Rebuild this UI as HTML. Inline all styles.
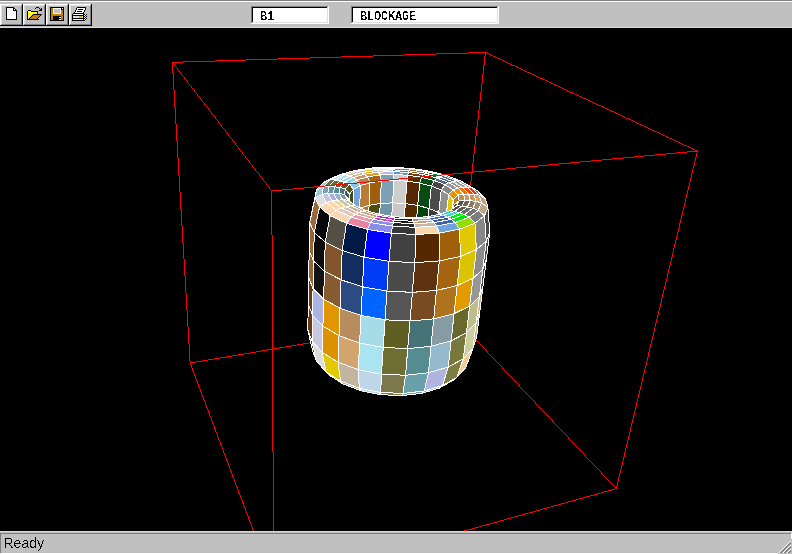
<!DOCTYPE html>
<html><head><meta charset="utf-8"><style>
html,body{margin:0;padding:0;background:#000;overflow:hidden;}
svg{display:block;}
</style></head><body>
<svg width="792" height="554" viewBox="0 0 792 554">
<defs><filter id="alias" x="0" y="0" width="100%" height="100%"><feComponentTransfer><feFuncA type="discrete" tableValues="0 0 0 1 1"/></feComponentTransfer></filter></defs>
<rect x="0" y="0" width="792" height="554" fill="#000"/>
<svg x="0" y="28" width="792" height="503" viewBox="0 28 792 503">
<g fill="#ff0000" shape-rendering="crispEdges"><rect x="172" y="62" width="11" height="1"/><rect x="183" y="61" width="32" height="1"/><rect x="215" y="60" width="31" height="1"/><rect x="246" y="59" width="32" height="1"/><rect x="278" y="58" width="32" height="1"/><rect x="310" y="57" width="31" height="1"/><rect x="341" y="56" width="32" height="1"/><rect x="373" y="55" width="31" height="1"/><rect x="404" y="54" width="32" height="1"/><rect x="436" y="53" width="32" height="1"/><rect x="468" y="52" width="18" height="1"/><rect x="485" y="52" width="2" height="1"/><rect x="487" y="53" width="2" height="1"/><rect x="489" y="54" width="2" height="1"/><rect x="491" y="55" width="2" height="1"/><rect x="493" y="56" width="2" height="1"/><rect x="495" y="57" width="2" height="1"/><rect x="497" y="58" width="3" height="1"/><rect x="500" y="59" width="2" height="1"/><rect x="502" y="60" width="2" height="1"/><rect x="504" y="61" width="2" height="1"/><rect x="506" y="62" width="2" height="1"/><rect x="508" y="63" width="2" height="1"/><rect x="510" y="64" width="2" height="1"/><rect x="512" y="65" width="3" height="1"/><rect x="515" y="66" width="2" height="1"/><rect x="517" y="67" width="2" height="1"/><rect x="519" y="68" width="2" height="1"/><rect x="521" y="69" width="2" height="1"/><rect x="523" y="70" width="2" height="1"/><rect x="525" y="71" width="2" height="1"/><rect x="527" y="72" width="3" height="1"/><rect x="530" y="73" width="2" height="1"/><rect x="532" y="74" width="2" height="1"/><rect x="534" y="75" width="2" height="1"/><rect x="536" y="76" width="2" height="1"/><rect x="538" y="77" width="2" height="1"/><rect x="540" y="78" width="3" height="1"/><rect x="543" y="79" width="2" height="1"/><rect x="545" y="80" width="2" height="1"/><rect x="547" y="81" width="2" height="1"/><rect x="549" y="82" width="2" height="1"/><rect x="551" y="83" width="2" height="1"/><rect x="553" y="84" width="2" height="1"/><rect x="555" y="85" width="3" height="1"/><rect x="558" y="86" width="2" height="1"/><rect x="560" y="87" width="2" height="1"/><rect x="562" y="88" width="2" height="1"/><rect x="564" y="89" width="2" height="1"/><rect x="566" y="90" width="2" height="1"/><rect x="568" y="91" width="2" height="1"/><rect x="570" y="92" width="3" height="1"/><rect x="573" y="93" width="2" height="1"/><rect x="575" y="94" width="2" height="1"/><rect x="577" y="95" width="2" height="1"/><rect x="579" y="96" width="2" height="1"/><rect x="581" y="97" width="2" height="1"/><rect x="583" y="98" width="3" height="1"/><rect x="586" y="99" width="2" height="1"/><rect x="588" y="100" width="2" height="1"/><rect x="590" y="101" width="2" height="1"/><rect x="592" y="102" width="2" height="1"/><rect x="594" y="103" width="2" height="1"/><rect x="596" y="104" width="2" height="1"/><rect x="598" y="105" width="3" height="1"/><rect x="601" y="106" width="2" height="1"/><rect x="603" y="107" width="2" height="1"/><rect x="605" y="108" width="2" height="1"/><rect x="607" y="109" width="2" height="1"/><rect x="609" y="110" width="2" height="1"/><rect x="611" y="111" width="3" height="1"/><rect x="614" y="112" width="2" height="1"/><rect x="616" y="113" width="2" height="1"/><rect x="618" y="114" width="2" height="1"/><rect x="620" y="115" width="2" height="1"/><rect x="622" y="116" width="2" height="1"/><rect x="624" y="117" width="2" height="1"/><rect x="626" y="118" width="3" height="1"/><rect x="629" y="119" width="2" height="1"/><rect x="631" y="120" width="2" height="1"/><rect x="633" y="121" width="2" height="1"/><rect x="635" y="122" width="2" height="1"/><rect x="637" y="123" width="2" height="1"/><rect x="639" y="124" width="2" height="1"/><rect x="641" y="125" width="3" height="1"/><rect x="644" y="126" width="2" height="1"/><rect x="646" y="127" width="2" height="1"/><rect x="648" y="128" width="2" height="1"/><rect x="650" y="129" width="2" height="1"/><rect x="652" y="130" width="2" height="1"/><rect x="654" y="131" width="3" height="1"/><rect x="657" y="132" width="2" height="1"/><rect x="659" y="133" width="2" height="1"/><rect x="661" y="134" width="2" height="1"/><rect x="663" y="135" width="2" height="1"/><rect x="665" y="136" width="2" height="1"/><rect x="667" y="137" width="2" height="1"/><rect x="669" y="138" width="3" height="1"/><rect x="672" y="139" width="2" height="1"/><rect x="674" y="140" width="2" height="1"/><rect x="676" y="141" width="2" height="1"/><rect x="678" y="142" width="2" height="1"/><rect x="680" y="143" width="2" height="1"/><rect x="682" y="144" width="2" height="1"/><rect x="684" y="145" width="3" height="1"/><rect x="687" y="146" width="2" height="1"/><rect x="689" y="147" width="2" height="1"/><rect x="691" y="148" width="2" height="1"/><rect x="693" y="149" width="2" height="1"/><rect x="695" y="150" width="2" height="1"/><rect x="697" y="151" width="1" height="1"/><rect x="172" y="62" width="1" height="1"/><rect x="173" y="63" width="1" height="1"/><rect x="174" y="64" width="1" height="1"/><rect x="174" y="65" width="1" height="1"/><rect x="175" y="66" width="1" height="1"/><rect x="176" y="67" width="1" height="1"/><rect x="177" y="68" width="1" height="1"/><rect x="177" y="69" width="1" height="1"/><rect x="178" y="70" width="1" height="1"/><rect x="179" y="71" width="1" height="1"/><rect x="180" y="72" width="1" height="1"/><rect x="180" y="73" width="1" height="1"/><rect x="181" y="74" width="1" height="1"/><rect x="182" y="75" width="1" height="1"/><rect x="183" y="76" width="1" height="1"/><rect x="184" y="77" width="1" height="1"/><rect x="184" y="78" width="1" height="1"/><rect x="185" y="79" width="1" height="1"/><rect x="186" y="80" width="1" height="1"/><rect x="187" y="81" width="1" height="1"/><rect x="187" y="82" width="1" height="1"/><rect x="188" y="83" width="1" height="1"/><rect x="189" y="84" width="1" height="1"/><rect x="190" y="85" width="1" height="1"/><rect x="191" y="86" width="1" height="1"/><rect x="191" y="87" width="1" height="1"/><rect x="192" y="88" width="1" height="1"/><rect x="193" y="89" width="1" height="1"/><rect x="194" y="90" width="1" height="1"/><rect x="194" y="91" width="1" height="1"/><rect x="195" y="92" width="1" height="1"/><rect x="196" y="93" width="1" height="1"/><rect x="197" y="94" width="1" height="1"/><rect x="197" y="95" width="1" height="1"/><rect x="198" y="96" width="1" height="1"/><rect x="199" y="97" width="1" height="1"/><rect x="200" y="98" width="1" height="1"/><rect x="201" y="99" width="1" height="1"/><rect x="201" y="100" width="1" height="1"/><rect x="202" y="101" width="1" height="1"/><rect x="203" y="102" width="1" height="1"/><rect x="204" y="103" width="1" height="1"/><rect x="204" y="104" width="1" height="1"/><rect x="205" y="105" width="1" height="1"/><rect x="206" y="106" width="1" height="1"/><rect x="207" y="107" width="1" height="1"/><rect x="208" y="108" width="1" height="1"/><rect x="208" y="109" width="1" height="1"/><rect x="209" y="110" width="1" height="1"/><rect x="210" y="111" width="1" height="1"/><rect x="211" y="112" width="1" height="1"/><rect x="211" y="113" width="1" height="1"/><rect x="212" y="114" width="1" height="1"/><rect x="213" y="115" width="1" height="1"/><rect x="214" y="116" width="1" height="1"/><rect x="215" y="117" width="1" height="1"/><rect x="215" y="118" width="1" height="1"/><rect x="216" y="119" width="1" height="1"/><rect x="217" y="120" width="1" height="1"/><rect x="218" y="121" width="1" height="1"/><rect x="218" y="122" width="1" height="1"/><rect x="219" y="123" width="1" height="1"/><rect x="220" y="124" width="1" height="1"/><rect x="221" y="125" width="1" height="1"/><rect x="221" y="126" width="1" height="1"/><rect x="222" y="127" width="1" height="1"/><rect x="223" y="128" width="1" height="1"/><rect x="224" y="129" width="1" height="1"/><rect x="225" y="130" width="1" height="1"/><rect x="225" y="131" width="1" height="1"/><rect x="226" y="132" width="1" height="1"/><rect x="227" y="133" width="1" height="1"/><rect x="228" y="134" width="1" height="1"/><rect x="228" y="135" width="1" height="1"/><rect x="229" y="136" width="1" height="1"/><rect x="230" y="137" width="1" height="1"/><rect x="231" y="138" width="1" height="1"/><rect x="232" y="139" width="1" height="1"/><rect x="232" y="140" width="1" height="1"/><rect x="233" y="141" width="1" height="1"/><rect x="234" y="142" width="1" height="1"/><rect x="235" y="143" width="1" height="1"/><rect x="235" y="144" width="1" height="1"/><rect x="236" y="145" width="1" height="1"/><rect x="237" y="146" width="1" height="1"/><rect x="238" y="147" width="1" height="1"/><rect x="238" y="148" width="1" height="1"/><rect x="239" y="149" width="1" height="1"/><rect x="240" y="150" width="1" height="1"/><rect x="241" y="151" width="1" height="1"/><rect x="242" y="152" width="1" height="1"/><rect x="242" y="153" width="1" height="1"/><rect x="243" y="154" width="1" height="1"/><rect x="244" y="155" width="1" height="1"/><rect x="245" y="156" width="1" height="1"/><rect x="245" y="157" width="1" height="1"/><rect x="246" y="158" width="1" height="1"/><rect x="247" y="159" width="1" height="1"/><rect x="248" y="160" width="1" height="1"/><rect x="249" y="161" width="1" height="1"/><rect x="249" y="162" width="1" height="1"/><rect x="250" y="163" width="1" height="1"/><rect x="251" y="164" width="1" height="1"/><rect x="252" y="165" width="1" height="1"/><rect x="252" y="166" width="1" height="1"/><rect x="253" y="167" width="1" height="1"/><rect x="254" y="168" width="1" height="1"/><rect x="255" y="169" width="1" height="1"/><rect x="255" y="170" width="1" height="1"/><rect x="256" y="171" width="1" height="1"/><rect x="257" y="172" width="1" height="1"/><rect x="258" y="173" width="1" height="1"/><rect x="259" y="174" width="1" height="1"/><rect x="259" y="175" width="1" height="1"/><rect x="260" y="176" width="1" height="1"/><rect x="261" y="177" width="1" height="1"/><rect x="262" y="178" width="1" height="1"/><rect x="262" y="179" width="1" height="1"/><rect x="263" y="180" width="1" height="1"/><rect x="264" y="181" width="1" height="1"/><rect x="265" y="182" width="1" height="1"/><rect x="266" y="183" width="1" height="1"/><rect x="266" y="184" width="1" height="1"/><rect x="267" y="185" width="1" height="1"/><rect x="268" y="186" width="1" height="1"/><rect x="269" y="187" width="1" height="1"/><rect x="269" y="188" width="1" height="1"/><rect x="270" y="189" width="1" height="1"/><rect x="271" y="190" width="1" height="1"/><rect x="172" y="62" width="1" height="1"/><rect x="172" y="63" width="1" height="1"/><rect x="172" y="64" width="1" height="1"/><rect x="172" y="65" width="1" height="1"/><rect x="172" y="66" width="1" height="1"/><rect x="172" y="67" width="1" height="1"/><rect x="172" y="68" width="1" height="1"/><rect x="172" y="69" width="1" height="1"/><rect x="172" y="70" width="1" height="1"/><rect x="172" y="71" width="1" height="1"/><rect x="172" y="72" width="1" height="1"/><rect x="173" y="73" width="1" height="1"/><rect x="173" y="74" width="1" height="1"/><rect x="173" y="75" width="1" height="1"/><rect x="173" y="76" width="1" height="1"/><rect x="173" y="77" width="1" height="1"/><rect x="173" y="78" width="1" height="1"/><rect x="173" y="79" width="1" height="1"/><rect x="173" y="80" width="1" height="1"/><rect x="173" y="81" width="1" height="1"/><rect x="173" y="82" width="1" height="1"/><rect x="173" y="83" width="1" height="1"/><rect x="173" y="84" width="1" height="1"/><rect x="173" y="85" width="1" height="1"/><rect x="173" y="86" width="1" height="1"/><rect x="173" y="87" width="1" height="1"/><rect x="173" y="88" width="1" height="1"/><rect x="173" y="89" width="1" height="1"/><rect x="174" y="90" width="1" height="1"/><rect x="174" y="91" width="1" height="1"/><rect x="174" y="92" width="1" height="1"/><rect x="174" y="93" width="1" height="1"/><rect x="174" y="94" width="1" height="1"/><rect x="174" y="95" width="1" height="1"/><rect x="174" y="96" width="1" height="1"/><rect x="174" y="97" width="1" height="1"/><rect x="174" y="98" width="1" height="1"/><rect x="174" y="99" width="1" height="1"/><rect x="174" y="100" width="1" height="1"/><rect x="174" y="101" width="1" height="1"/><rect x="174" y="102" width="1" height="1"/><rect x="174" y="103" width="1" height="1"/><rect x="174" y="104" width="1" height="1"/><rect x="174" y="105" width="1" height="1"/><rect x="174" y="106" width="1" height="1"/><rect x="175" y="107" width="1" height="1"/><rect x="175" y="108" width="1" height="1"/><rect x="175" y="109" width="1" height="1"/><rect x="175" y="110" width="1" height="1"/><rect x="175" y="111" width="1" height="1"/><rect x="175" y="112" width="1" height="1"/><rect x="175" y="113" width="1" height="1"/><rect x="175" y="114" width="1" height="1"/><rect x="175" y="115" width="1" height="1"/><rect x="175" y="116" width="1" height="1"/><rect x="175" y="117" width="1" height="1"/><rect x="175" y="118" width="1" height="1"/><rect x="175" y="119" width="1" height="1"/><rect x="175" y="120" width="1" height="1"/><rect x="175" y="121" width="1" height="1"/><rect x="175" y="122" width="1" height="1"/><rect x="175" y="123" width="1" height="1"/><rect x="176" y="124" width="1" height="1"/><rect x="176" y="125" width="1" height="1"/><rect x="176" y="126" width="1" height="1"/><rect x="176" y="127" width="1" height="1"/><rect x="176" y="128" width="1" height="1"/><rect x="176" y="129" width="1" height="1"/><rect x="176" y="130" width="1" height="1"/><rect x="176" y="131" width="1" height="1"/><rect x="176" y="132" width="1" height="1"/><rect x="176" y="133" width="1" height="1"/><rect x="176" y="134" width="1" height="1"/><rect x="176" y="135" width="1" height="1"/><rect x="176" y="136" width="1" height="1"/><rect x="176" y="137" width="1" height="1"/><rect x="176" y="138" width="1" height="1"/><rect x="176" y="139" width="1" height="1"/><rect x="176" y="140" width="1" height="1"/><rect x="177" y="141" width="1" height="1"/><rect x="177" y="142" width="1" height="1"/><rect x="177" y="143" width="1" height="1"/><rect x="177" y="144" width="1" height="1"/><rect x="177" y="145" width="1" height="1"/><rect x="177" y="146" width="1" height="1"/><rect x="177" y="147" width="1" height="1"/><rect x="177" y="148" width="1" height="1"/><rect x="177" y="149" width="1" height="1"/><rect x="177" y="150" width="1" height="1"/><rect x="177" y="151" width="1" height="1"/><rect x="177" y="152" width="1" height="1"/><rect x="177" y="153" width="1" height="1"/><rect x="177" y="154" width="1" height="1"/><rect x="177" y="155" width="1" height="1"/><rect x="177" y="156" width="1" height="1"/><rect x="177" y="157" width="1" height="1"/><rect x="178" y="158" width="1" height="1"/><rect x="178" y="159" width="1" height="1"/><rect x="178" y="160" width="1" height="1"/><rect x="178" y="161" width="1" height="1"/><rect x="178" y="162" width="1" height="1"/><rect x="178" y="163" width="1" height="1"/><rect x="178" y="164" width="1" height="1"/><rect x="178" y="165" width="1" height="1"/><rect x="178" y="166" width="1" height="1"/><rect x="178" y="167" width="1" height="1"/><rect x="178" y="168" width="1" height="1"/><rect x="178" y="169" width="1" height="1"/><rect x="178" y="170" width="1" height="1"/><rect x="178" y="171" width="1" height="1"/><rect x="178" y="172" width="1" height="1"/><rect x="178" y="173" width="1" height="1"/><rect x="178" y="174" width="1" height="1"/><rect x="179" y="175" width="1" height="1"/><rect x="179" y="176" width="1" height="1"/><rect x="179" y="177" width="1" height="1"/><rect x="179" y="178" width="1" height="1"/><rect x="179" y="179" width="1" height="1"/><rect x="179" y="180" width="1" height="1"/><rect x="179" y="181" width="1" height="1"/><rect x="179" y="182" width="1" height="1"/><rect x="179" y="183" width="1" height="1"/><rect x="179" y="184" width="1" height="1"/><rect x="179" y="185" width="1" height="1"/><rect x="179" y="186" width="1" height="1"/><rect x="179" y="187" width="1" height="1"/><rect x="179" y="188" width="1" height="1"/><rect x="179" y="189" width="1" height="1"/><rect x="179" y="190" width="1" height="1"/><rect x="179" y="191" width="1" height="1"/><rect x="180" y="192" width="1" height="1"/><rect x="180" y="193" width="1" height="1"/><rect x="180" y="194" width="1" height="1"/><rect x="180" y="195" width="1" height="1"/><rect x="180" y="196" width="1" height="1"/><rect x="180" y="197" width="1" height="1"/><rect x="180" y="198" width="1" height="1"/><rect x="180" y="199" width="1" height="1"/><rect x="180" y="200" width="1" height="1"/><rect x="180" y="201" width="1" height="1"/><rect x="180" y="202" width="1" height="1"/><rect x="180" y="203" width="1" height="1"/><rect x="180" y="204" width="1" height="1"/><rect x="180" y="205" width="1" height="1"/><rect x="180" y="206" width="1" height="1"/><rect x="180" y="207" width="1" height="1"/><rect x="180" y="208" width="1" height="1"/><rect x="181" y="209" width="1" height="1"/><rect x="181" y="210" width="1" height="1"/><rect x="181" y="211" width="1" height="1"/><rect x="181" y="212" width="1" height="1"/><rect x="181" y="213" width="1" height="1"/><rect x="181" y="214" width="1" height="1"/><rect x="181" y="215" width="1" height="1"/><rect x="181" y="216" width="1" height="1"/><rect x="181" y="217" width="1" height="1"/><rect x="181" y="218" width="1" height="1"/><rect x="181" y="219" width="1" height="1"/><rect x="181" y="220" width="1" height="1"/><rect x="181" y="221" width="1" height="1"/><rect x="181" y="222" width="1" height="1"/><rect x="181" y="223" width="1" height="1"/><rect x="181" y="224" width="1" height="1"/><rect x="181" y="225" width="1" height="1"/><rect x="182" y="226" width="1" height="1"/><rect x="182" y="227" width="1" height="1"/><rect x="182" y="228" width="1" height="1"/><rect x="182" y="229" width="1" height="1"/><rect x="182" y="230" width="1" height="1"/><rect x="182" y="231" width="1" height="1"/><rect x="182" y="232" width="1" height="1"/><rect x="182" y="233" width="1" height="1"/><rect x="182" y="234" width="1" height="1"/><rect x="182" y="235" width="1" height="1"/><rect x="182" y="236" width="1" height="1"/><rect x="182" y="237" width="1" height="1"/><rect x="182" y="238" width="1" height="1"/><rect x="182" y="239" width="1" height="1"/><rect x="182" y="240" width="1" height="1"/><rect x="182" y="241" width="1" height="1"/><rect x="182" y="242" width="1" height="1"/><rect x="183" y="243" width="1" height="1"/><rect x="183" y="244" width="1" height="1"/><rect x="183" y="245" width="1" height="1"/><rect x="183" y="246" width="1" height="1"/><rect x="183" y="247" width="1" height="1"/><rect x="183" y="248" width="1" height="1"/><rect x="183" y="249" width="1" height="1"/><rect x="183" y="250" width="1" height="1"/><rect x="183" y="251" width="1" height="1"/><rect x="183" y="252" width="1" height="1"/><rect x="183" y="253" width="1" height="1"/><rect x="183" y="254" width="1" height="1"/><rect x="183" y="255" width="1" height="1"/><rect x="183" y="256" width="1" height="1"/><rect x="183" y="257" width="1" height="1"/><rect x="183" y="258" width="1" height="1"/><rect x="184" y="259" width="1" height="1"/><rect x="184" y="260" width="1" height="1"/><rect x="184" y="261" width="1" height="1"/><rect x="184" y="262" width="1" height="1"/><rect x="184" y="263" width="1" height="1"/><rect x="184" y="264" width="1" height="1"/><rect x="184" y="265" width="1" height="1"/><rect x="184" y="266" width="1" height="1"/><rect x="184" y="267" width="1" height="1"/><rect x="184" y="268" width="1" height="1"/><rect x="184" y="269" width="1" height="1"/><rect x="184" y="270" width="1" height="1"/><rect x="184" y="271" width="1" height="1"/><rect x="184" y="272" width="1" height="1"/><rect x="184" y="273" width="1" height="1"/><rect x="184" y="274" width="1" height="1"/><rect x="184" y="275" width="1" height="1"/><rect x="185" y="276" width="1" height="1"/><rect x="185" y="277" width="1" height="1"/><rect x="185" y="278" width="1" height="1"/><rect x="185" y="279" width="1" height="1"/><rect x="185" y="280" width="1" height="1"/><rect x="185" y="281" width="1" height="1"/><rect x="185" y="282" width="1" height="1"/><rect x="185" y="283" width="1" height="1"/><rect x="185" y="284" width="1" height="1"/><rect x="185" y="285" width="1" height="1"/><rect x="185" y="286" width="1" height="1"/><rect x="185" y="287" width="1" height="1"/><rect x="185" y="288" width="1" height="1"/><rect x="185" y="289" width="1" height="1"/><rect x="185" y="290" width="1" height="1"/><rect x="185" y="291" width="1" height="1"/><rect x="185" y="292" width="1" height="1"/><rect x="186" y="293" width="1" height="1"/><rect x="186" y="294" width="1" height="1"/><rect x="186" y="295" width="1" height="1"/><rect x="186" y="296" width="1" height="1"/><rect x="186" y="297" width="1" height="1"/><rect x="186" y="298" width="1" height="1"/><rect x="186" y="299" width="1" height="1"/><rect x="186" y="300" width="1" height="1"/><rect x="186" y="301" width="1" height="1"/><rect x="186" y="302" width="1" height="1"/><rect x="186" y="303" width="1" height="1"/><rect x="186" y="304" width="1" height="1"/><rect x="186" y="305" width="1" height="1"/><rect x="186" y="306" width="1" height="1"/><rect x="186" y="307" width="1" height="1"/><rect x="186" y="308" width="1" height="1"/><rect x="186" y="309" width="1" height="1"/><rect x="187" y="310" width="1" height="1"/><rect x="187" y="311" width="1" height="1"/><rect x="187" y="312" width="1" height="1"/><rect x="187" y="313" width="1" height="1"/><rect x="187" y="314" width="1" height="1"/><rect x="187" y="315" width="1" height="1"/><rect x="187" y="316" width="1" height="1"/><rect x="187" y="317" width="1" height="1"/><rect x="187" y="318" width="1" height="1"/><rect x="187" y="319" width="1" height="1"/><rect x="187" y="320" width="1" height="1"/><rect x="187" y="321" width="1" height="1"/><rect x="187" y="322" width="1" height="1"/><rect x="187" y="323" width="1" height="1"/><rect x="187" y="324" width="1" height="1"/><rect x="187" y="325" width="1" height="1"/><rect x="187" y="326" width="1" height="1"/><rect x="188" y="327" width="1" height="1"/><rect x="188" y="328" width="1" height="1"/><rect x="188" y="329" width="1" height="1"/><rect x="188" y="330" width="1" height="1"/><rect x="188" y="331" width="1" height="1"/><rect x="188" y="332" width="1" height="1"/><rect x="188" y="333" width="1" height="1"/><rect x="188" y="334" width="1" height="1"/><rect x="188" y="335" width="1" height="1"/><rect x="188" y="336" width="1" height="1"/><rect x="188" y="337" width="1" height="1"/><rect x="188" y="338" width="1" height="1"/><rect x="188" y="339" width="1" height="1"/><rect x="188" y="340" width="1" height="1"/><rect x="188" y="341" width="1" height="1"/><rect x="188" y="342" width="1" height="1"/><rect x="188" y="343" width="1" height="1"/><rect x="189" y="344" width="1" height="1"/><rect x="189" y="345" width="1" height="1"/><rect x="189" y="346" width="1" height="1"/><rect x="189" y="347" width="1" height="1"/><rect x="189" y="348" width="1" height="1"/><rect x="189" y="349" width="1" height="1"/><rect x="189" y="350" width="1" height="1"/><rect x="189" y="351" width="1" height="1"/><rect x="189" y="352" width="1" height="1"/><rect x="189" y="353" width="1" height="1"/><rect x="189" y="354" width="1" height="1"/><rect x="189" y="355" width="1" height="1"/><rect x="189" y="356" width="1" height="1"/><rect x="189" y="357" width="1" height="1"/><rect x="189" y="358" width="1" height="1"/><rect x="189" y="359" width="1" height="1"/><rect x="189" y="360" width="1" height="1"/><rect x="190" y="361" width="1" height="1"/><rect x="190" y="362" width="1" height="1"/><rect x="190" y="363" width="1" height="1"/><rect x="485" y="52" width="1" height="1"/><rect x="485" y="53" width="1" height="1"/><rect x="485" y="54" width="1" height="1"/><rect x="485" y="55" width="1" height="1"/><rect x="484" y="56" width="1" height="1"/><rect x="484" y="57" width="1" height="1"/><rect x="484" y="58" width="1" height="1"/><rect x="484" y="59" width="1" height="1"/><rect x="484" y="60" width="1" height="1"/><rect x="484" y="61" width="1" height="1"/><rect x="484" y="62" width="1" height="1"/><rect x="484" y="63" width="1" height="1"/><rect x="484" y="64" width="1" height="1"/><rect x="483" y="65" width="1" height="1"/><rect x="483" y="66" width="1" height="1"/><rect x="483" y="67" width="1" height="1"/><rect x="483" y="68" width="1" height="1"/><rect x="483" y="69" width="1" height="1"/><rect x="483" y="70" width="1" height="1"/><rect x="483" y="71" width="1" height="1"/><rect x="483" y="72" width="1" height="1"/><rect x="483" y="73" width="1" height="1"/><rect x="482" y="74" width="1" height="1"/><rect x="482" y="75" width="1" height="1"/><rect x="482" y="76" width="1" height="1"/><rect x="482" y="77" width="1" height="1"/><rect x="482" y="78" width="1" height="1"/><rect x="482" y="79" width="1" height="1"/><rect x="482" y="80" width="1" height="1"/><rect x="482" y="81" width="1" height="1"/><rect x="482" y="82" width="1" height="1"/><rect x="481" y="83" width="1" height="1"/><rect x="481" y="84" width="1" height="1"/><rect x="481" y="85" width="1" height="1"/><rect x="481" y="86" width="1" height="1"/><rect x="481" y="87" width="1" height="1"/><rect x="481" y="88" width="1" height="1"/><rect x="481" y="89" width="1" height="1"/><rect x="481" y="90" width="1" height="1"/><rect x="481" y="91" width="1" height="1"/><rect x="480" y="92" width="1" height="1"/><rect x="480" y="93" width="1" height="1"/><rect x="480" y="94" width="1" height="1"/><rect x="480" y="95" width="1" height="1"/><rect x="480" y="96" width="1" height="1"/><rect x="480" y="97" width="1" height="1"/><rect x="480" y="98" width="1" height="1"/><rect x="480" y="99" width="1" height="1"/><rect x="480" y="100" width="1" height="1"/><rect x="479" y="101" width="1" height="1"/><rect x="479" y="102" width="1" height="1"/><rect x="479" y="103" width="1" height="1"/><rect x="479" y="104" width="1" height="1"/><rect x="479" y="105" width="1" height="1"/><rect x="479" y="106" width="1" height="1"/><rect x="479" y="107" width="1" height="1"/><rect x="479" y="108" width="1" height="1"/><rect x="479" y="109" width="1" height="1"/><rect x="478" y="110" width="1" height="1"/><rect x="478" y="111" width="1" height="1"/><rect x="478" y="112" width="1" height="1"/><rect x="478" y="113" width="1" height="1"/><rect x="478" y="114" width="1" height="1"/><rect x="478" y="115" width="1" height="1"/><rect x="478" y="116" width="1" height="1"/><rect x="478" y="117" width="1" height="1"/><rect x="478" y="118" width="1" height="1"/><rect x="477" y="119" width="1" height="1"/><rect x="477" y="120" width="1" height="1"/><rect x="477" y="121" width="1" height="1"/><rect x="477" y="122" width="1" height="1"/><rect x="477" y="123" width="1" height="1"/><rect x="477" y="124" width="1" height="1"/><rect x="477" y="125" width="1" height="1"/><rect x="477" y="126" width="1" height="1"/><rect x="476" y="127" width="1" height="1"/><rect x="476" y="128" width="1" height="1"/><rect x="476" y="129" width="1" height="1"/><rect x="476" y="130" width="1" height="1"/><rect x="476" y="131" width="1" height="1"/><rect x="476" y="132" width="1" height="1"/><rect x="476" y="133" width="1" height="1"/><rect x="476" y="134" width="1" height="1"/><rect x="476" y="135" width="1" height="1"/><rect x="475" y="136" width="1" height="1"/><rect x="475" y="137" width="1" height="1"/><rect x="475" y="138" width="1" height="1"/><rect x="475" y="139" width="1" height="1"/><rect x="475" y="140" width="1" height="1"/><rect x="475" y="141" width="1" height="1"/><rect x="475" y="142" width="1" height="1"/><rect x="475" y="143" width="1" height="1"/><rect x="475" y="144" width="1" height="1"/><rect x="474" y="145" width="1" height="1"/><rect x="474" y="146" width="1" height="1"/><rect x="474" y="147" width="1" height="1"/><rect x="474" y="148" width="1" height="1"/><rect x="474" y="149" width="1" height="1"/><rect x="474" y="150" width="1" height="1"/><rect x="474" y="151" width="1" height="1"/><rect x="474" y="152" width="1" height="1"/><rect x="474" y="153" width="1" height="1"/><rect x="473" y="154" width="1" height="1"/><rect x="473" y="155" width="1" height="1"/><rect x="473" y="156" width="1" height="1"/><rect x="473" y="157" width="1" height="1"/><rect x="473" y="158" width="1" height="1"/><rect x="473" y="159" width="1" height="1"/><rect x="473" y="160" width="1" height="1"/><rect x="473" y="161" width="1" height="1"/><rect x="473" y="162" width="1" height="1"/><rect x="472" y="163" width="1" height="1"/><rect x="472" y="164" width="1" height="1"/><rect x="472" y="165" width="1" height="1"/><rect x="472" y="166" width="1" height="1"/><rect x="472" y="167" width="1" height="1"/><rect x="472" y="168" width="1" height="1"/><rect x="472" y="169" width="1" height="1"/><rect x="472" y="170" width="1" height="1"/><rect x="472" y="171" width="1" height="1"/><rect x="471" y="172" width="1" height="1"/><rect x="471" y="173" width="1" height="1"/><rect x="471" y="174" width="1" height="1"/><rect x="471" y="175" width="1" height="1"/><rect x="471" y="176" width="1" height="1"/><rect x="471" y="177" width="1" height="1"/><rect x="471" y="178" width="1" height="1"/><rect x="471" y="179" width="1" height="1"/><rect x="471" y="180" width="1" height="1"/><rect x="470" y="181" width="1" height="1"/><rect x="470" y="182" width="1" height="1"/><rect x="470" y="183" width="1" height="1"/><rect x="470" y="184" width="1" height="1"/><rect x="470" y="185" width="1" height="1"/><rect x="470" y="186" width="1" height="1"/><rect x="470" y="187" width="1" height="1"/><rect x="470" y="188" width="1" height="1"/><rect x="470" y="189" width="1" height="1"/><rect x="469" y="190" width="1" height="1"/><rect x="469" y="191" width="1" height="1"/><rect x="469" y="192" width="1" height="1"/><rect x="469" y="193" width="1" height="1"/><rect x="469" y="194" width="1" height="1"/><rect x="469" y="195" width="1" height="1"/><rect x="469" y="196" width="1" height="1"/><rect x="469" y="197" width="1" height="1"/><rect x="469" y="198" width="1" height="1"/><rect x="468" y="199" width="1" height="1"/><rect x="468" y="200" width="1" height="1"/><rect x="468" y="201" width="1" height="1"/><rect x="468" y="202" width="1" height="1"/><rect x="468" y="203" width="1" height="1"/><rect x="468" y="204" width="1" height="1"/><rect x="468" y="205" width="1" height="1"/><rect x="468" y="206" width="1" height="1"/><rect x="468" y="207" width="1" height="1"/><rect x="467" y="208" width="1" height="1"/><rect x="467" y="209" width="1" height="1"/><rect x="467" y="210" width="1" height="1"/><rect x="467" y="211" width="1" height="1"/><rect x="467" y="212" width="1" height="1"/><rect x="467" y="213" width="1" height="1"/><rect x="467" y="214" width="1" height="1"/><rect x="467" y="215" width="1" height="1"/><rect x="467" y="216" width="1" height="1"/><rect x="466" y="217" width="1" height="1"/><rect x="466" y="218" width="1" height="1"/><rect x="466" y="219" width="1" height="1"/><rect x="466" y="220" width="1" height="1"/><rect x="466" y="221" width="1" height="1"/><rect x="466" y="222" width="1" height="1"/><rect x="466" y="223" width="1" height="1"/><rect x="466" y="224" width="1" height="1"/><rect x="466" y="225" width="1" height="1"/><rect x="465" y="226" width="1" height="1"/><rect x="465" y="227" width="1" height="1"/><rect x="465" y="228" width="1" height="1"/><rect x="465" y="229" width="1" height="1"/><rect x="465" y="230" width="1" height="1"/><rect x="465" y="231" width="1" height="1"/><rect x="465" y="232" width="1" height="1"/><rect x="465" y="233" width="1" height="1"/><rect x="464" y="234" width="1" height="1"/><rect x="464" y="235" width="1" height="1"/><rect x="464" y="236" width="1" height="1"/><rect x="464" y="237" width="1" height="1"/><rect x="464" y="238" width="1" height="1"/><rect x="464" y="239" width="1" height="1"/><rect x="464" y="240" width="1" height="1"/><rect x="464" y="241" width="1" height="1"/><rect x="464" y="242" width="1" height="1"/><rect x="463" y="243" width="1" height="1"/><rect x="463" y="244" width="1" height="1"/><rect x="463" y="245" width="1" height="1"/><rect x="463" y="246" width="1" height="1"/><rect x="463" y="247" width="1" height="1"/><rect x="463" y="248" width="1" height="1"/><rect x="463" y="249" width="1" height="1"/><rect x="463" y="250" width="1" height="1"/><rect x="463" y="251" width="1" height="1"/><rect x="462" y="252" width="1" height="1"/><rect x="462" y="253" width="1" height="1"/><rect x="462" y="254" width="1" height="1"/><rect x="462" y="255" width="1" height="1"/><rect x="462" y="256" width="1" height="1"/><rect x="462" y="257" width="1" height="1"/><rect x="462" y="258" width="1" height="1"/><rect x="462" y="259" width="1" height="1"/><rect x="462" y="260" width="1" height="1"/><rect x="461" y="261" width="1" height="1"/><rect x="461" y="262" width="1" height="1"/><rect x="461" y="263" width="1" height="1"/><rect x="461" y="264" width="1" height="1"/><rect x="461" y="265" width="1" height="1"/><rect x="461" y="266" width="1" height="1"/><rect x="461" y="267" width="1" height="1"/><rect x="461" y="268" width="1" height="1"/><rect x="461" y="269" width="1" height="1"/><rect x="460" y="270" width="1" height="1"/><rect x="460" y="271" width="1" height="1"/><rect x="460" y="272" width="1" height="1"/><rect x="460" y="273" width="1" height="1"/><rect x="460" y="274" width="1" height="1"/><rect x="460" y="275" width="1" height="1"/><rect x="460" y="276" width="1" height="1"/><rect x="460" y="277" width="1" height="1"/><rect x="460" y="278" width="1" height="1"/><rect x="459" y="279" width="1" height="1"/><rect x="459" y="280" width="1" height="1"/><rect x="459" y="281" width="1" height="1"/><rect x="459" y="282" width="1" height="1"/><rect x="459" y="283" width="1" height="1"/><rect x="459" y="284" width="1" height="1"/><rect x="459" y="285" width="1" height="1"/><rect x="459" y="286" width="1" height="1"/><rect x="459" y="287" width="1" height="1"/><rect x="458" y="288" width="1" height="1"/><rect x="458" y="289" width="1" height="1"/><rect x="458" y="290" width="1" height="1"/><rect x="458" y="291" width="1" height="1"/><rect x="458" y="292" width="1" height="1"/><rect x="458" y="293" width="1" height="1"/><rect x="458" y="294" width="1" height="1"/><rect x="458" y="295" width="1" height="1"/><rect x="458" y="296" width="1" height="1"/><rect x="457" y="297" width="1" height="1"/><rect x="457" y="298" width="1" height="1"/><rect x="457" y="299" width="1" height="1"/><rect x="457" y="300" width="1" height="1"/><rect x="457" y="301" width="1" height="1"/><rect x="457" y="302" width="1" height="1"/><rect x="457" y="303" width="1" height="1"/><rect x="457" y="304" width="1" height="1"/><rect x="457" y="305" width="1" height="1"/><rect x="456" y="306" width="1" height="1"/><rect x="456" y="307" width="1" height="1"/><rect x="456" y="308" width="1" height="1"/><rect x="456" y="309" width="1" height="1"/><rect x="456" y="310" width="1" height="1"/><rect x="456" y="311" width="1" height="1"/><rect x="456" y="312" width="1" height="1"/><rect x="456" y="313" width="1" height="1"/><rect x="456" y="314" width="1" height="1"/><rect x="455" y="315" width="1" height="1"/><rect x="455" y="316" width="1" height="1"/><rect x="455" y="317" width="1" height="1"/><rect x="455" y="318" width="1" height="1"/><rect x="697" y="151" width="1" height="1"/><rect x="697" y="152" width="1" height="1"/><rect x="696" y="153" width="1" height="1"/><rect x="696" y="154" width="1" height="1"/><rect x="696" y="155" width="1" height="1"/><rect x="696" y="156" width="1" height="1"/><rect x="695" y="157" width="1" height="1"/><rect x="695" y="158" width="1" height="1"/><rect x="695" y="159" width="1" height="1"/><rect x="695" y="160" width="1" height="1"/><rect x="694" y="161" width="1" height="1"/><rect x="694" y="162" width="1" height="1"/><rect x="694" y="163" width="1" height="1"/><rect x="694" y="164" width="1" height="1"/><rect x="693" y="165" width="1" height="1"/><rect x="693" y="166" width="1" height="1"/><rect x="693" y="167" width="1" height="1"/><rect x="693" y="168" width="1" height="1"/><rect x="692" y="169" width="1" height="1"/><rect x="692" y="170" width="1" height="1"/><rect x="692" y="171" width="1" height="1"/><rect x="692" y="172" width="1" height="1"/><rect x="691" y="173" width="1" height="1"/><rect x="691" y="174" width="1" height="1"/><rect x="691" y="175" width="1" height="1"/><rect x="691" y="176" width="1" height="1"/><rect x="691" y="177" width="1" height="1"/><rect x="690" y="178" width="1" height="1"/><rect x="690" y="179" width="1" height="1"/><rect x="690" y="180" width="1" height="1"/><rect x="690" y="181" width="1" height="1"/><rect x="689" y="182" width="1" height="1"/><rect x="689" y="183" width="1" height="1"/><rect x="689" y="184" width="1" height="1"/><rect x="689" y="185" width="1" height="1"/><rect x="688" y="186" width="1" height="1"/><rect x="688" y="187" width="1" height="1"/><rect x="688" y="188" width="1" height="1"/><rect x="688" y="189" width="1" height="1"/><rect x="687" y="190" width="1" height="1"/><rect x="687" y="191" width="1" height="1"/><rect x="687" y="192" width="1" height="1"/><rect x="687" y="193" width="1" height="1"/><rect x="686" y="194" width="1" height="1"/><rect x="686" y="195" width="1" height="1"/><rect x="686" y="196" width="1" height="1"/><rect x="686" y="197" width="1" height="1"/><rect x="685" y="198" width="1" height="1"/><rect x="685" y="199" width="1" height="1"/><rect x="685" y="200" width="1" height="1"/><rect x="685" y="201" width="1" height="1"/><rect x="685" y="202" width="1" height="1"/><rect x="684" y="203" width="1" height="1"/><rect x="684" y="204" width="1" height="1"/><rect x="684" y="205" width="1" height="1"/><rect x="684" y="206" width="1" height="1"/><rect x="683" y="207" width="1" height="1"/><rect x="683" y="208" width="1" height="1"/><rect x="683" y="209" width="1" height="1"/><rect x="683" y="210" width="1" height="1"/><rect x="682" y="211" width="1" height="1"/><rect x="682" y="212" width="1" height="1"/><rect x="682" y="213" width="1" height="1"/><rect x="682" y="214" width="1" height="1"/><rect x="681" y="215" width="1" height="1"/><rect x="681" y="216" width="1" height="1"/><rect x="681" y="217" width="1" height="1"/><rect x="681" y="218" width="1" height="1"/><rect x="680" y="219" width="1" height="1"/><rect x="680" y="220" width="1" height="1"/><rect x="680" y="221" width="1" height="1"/><rect x="680" y="222" width="1" height="1"/><rect x="679" y="223" width="1" height="1"/><rect x="679" y="224" width="1" height="1"/><rect x="679" y="225" width="1" height="1"/><rect x="679" y="226" width="1" height="1"/><rect x="679" y="227" width="1" height="1"/><rect x="678" y="228" width="1" height="1"/><rect x="678" y="229" width="1" height="1"/><rect x="678" y="230" width="1" height="1"/><rect x="678" y="231" width="1" height="1"/><rect x="677" y="232" width="1" height="1"/><rect x="677" y="233" width="1" height="1"/><rect x="677" y="234" width="1" height="1"/><rect x="677" y="235" width="1" height="1"/><rect x="676" y="236" width="1" height="1"/><rect x="676" y="237" width="1" height="1"/><rect x="676" y="238" width="1" height="1"/><rect x="676" y="239" width="1" height="1"/><rect x="675" y="240" width="1" height="1"/><rect x="675" y="241" width="1" height="1"/><rect x="675" y="242" width="1" height="1"/><rect x="675" y="243" width="1" height="1"/><rect x="674" y="244" width="1" height="1"/><rect x="674" y="245" width="1" height="1"/><rect x="674" y="246" width="1" height="1"/><rect x="674" y="247" width="1" height="1"/><rect x="673" y="248" width="1" height="1"/><rect x="673" y="249" width="1" height="1"/><rect x="673" y="250" width="1" height="1"/><rect x="673" y="251" width="1" height="1"/><rect x="673" y="252" width="1" height="1"/><rect x="672" y="253" width="1" height="1"/><rect x="672" y="254" width="1" height="1"/><rect x="672" y="255" width="1" height="1"/><rect x="672" y="256" width="1" height="1"/><rect x="671" y="257" width="1" height="1"/><rect x="671" y="258" width="1" height="1"/><rect x="671" y="259" width="1" height="1"/><rect x="671" y="260" width="1" height="1"/><rect x="670" y="261" width="1" height="1"/><rect x="670" y="262" width="1" height="1"/><rect x="670" y="263" width="1" height="1"/><rect x="670" y="264" width="1" height="1"/><rect x="669" y="265" width="1" height="1"/><rect x="669" y="266" width="1" height="1"/><rect x="669" y="267" width="1" height="1"/><rect x="669" y="268" width="1" height="1"/><rect x="668" y="269" width="1" height="1"/><rect x="668" y="270" width="1" height="1"/><rect x="668" y="271" width="1" height="1"/><rect x="668" y="272" width="1" height="1"/><rect x="667" y="273" width="1" height="1"/><rect x="667" y="274" width="1" height="1"/><rect x="667" y="275" width="1" height="1"/><rect x="667" y="276" width="1" height="1"/><rect x="667" y="277" width="1" height="1"/><rect x="666" y="278" width="1" height="1"/><rect x="666" y="279" width="1" height="1"/><rect x="666" y="280" width="1" height="1"/><rect x="666" y="281" width="1" height="1"/><rect x="665" y="282" width="1" height="1"/><rect x="665" y="283" width="1" height="1"/><rect x="665" y="284" width="1" height="1"/><rect x="665" y="285" width="1" height="1"/><rect x="664" y="286" width="1" height="1"/><rect x="664" y="287" width="1" height="1"/><rect x="664" y="288" width="1" height="1"/><rect x="664" y="289" width="1" height="1"/><rect x="663" y="290" width="1" height="1"/><rect x="663" y="291" width="1" height="1"/><rect x="663" y="292" width="1" height="1"/><rect x="663" y="293" width="1" height="1"/><rect x="662" y="294" width="1" height="1"/><rect x="662" y="295" width="1" height="1"/><rect x="662" y="296" width="1" height="1"/><rect x="662" y="297" width="1" height="1"/><rect x="661" y="298" width="1" height="1"/><rect x="661" y="299" width="1" height="1"/><rect x="661" y="300" width="1" height="1"/><rect x="661" y="301" width="1" height="1"/><rect x="661" y="302" width="1" height="1"/><rect x="660" y="303" width="1" height="1"/><rect x="660" y="304" width="1" height="1"/><rect x="660" y="305" width="1" height="1"/><rect x="660" y="306" width="1" height="1"/><rect x="659" y="307" width="1" height="1"/><rect x="659" y="308" width="1" height="1"/><rect x="659" y="309" width="1" height="1"/><rect x="659" y="310" width="1" height="1"/><rect x="658" y="311" width="1" height="1"/><rect x="658" y="312" width="1" height="1"/><rect x="658" y="313" width="1" height="1"/><rect x="658" y="314" width="1" height="1"/><rect x="657" y="315" width="1" height="1"/><rect x="657" y="316" width="1" height="1"/><rect x="657" y="317" width="1" height="1"/><rect x="657" y="318" width="1" height="1"/><rect x="656" y="319" width="1" height="1"/><rect x="656" y="320" width="1" height="1"/><rect x="656" y="321" width="1" height="1"/><rect x="656" y="322" width="1" height="1"/><rect x="655" y="323" width="1" height="1"/><rect x="655" y="324" width="1" height="1"/><rect x="655" y="325" width="1" height="1"/><rect x="655" y="326" width="1" height="1"/><rect x="654" y="327" width="1" height="1"/><rect x="654" y="328" width="1" height="1"/><rect x="654" y="329" width="1" height="1"/><rect x="654" y="330" width="1" height="1"/><rect x="654" y="331" width="1" height="1"/><rect x="653" y="332" width="1" height="1"/><rect x="653" y="333" width="1" height="1"/><rect x="653" y="334" width="1" height="1"/><rect x="653" y="335" width="1" height="1"/><rect x="652" y="336" width="1" height="1"/><rect x="652" y="337" width="1" height="1"/><rect x="652" y="338" width="1" height="1"/><rect x="652" y="339" width="1" height="1"/><rect x="651" y="340" width="1" height="1"/><rect x="651" y="341" width="1" height="1"/><rect x="651" y="342" width="1" height="1"/><rect x="651" y="343" width="1" height="1"/><rect x="650" y="344" width="1" height="1"/><rect x="650" y="345" width="1" height="1"/><rect x="650" y="346" width="1" height="1"/><rect x="650" y="347" width="1" height="1"/><rect x="649" y="348" width="1" height="1"/><rect x="649" y="349" width="1" height="1"/><rect x="649" y="350" width="1" height="1"/><rect x="649" y="351" width="1" height="1"/><rect x="648" y="352" width="1" height="1"/><rect x="648" y="353" width="1" height="1"/><rect x="648" y="354" width="1" height="1"/><rect x="648" y="355" width="1" height="1"/><rect x="648" y="356" width="1" height="1"/><rect x="647" y="357" width="1" height="1"/><rect x="647" y="358" width="1" height="1"/><rect x="647" y="359" width="1" height="1"/><rect x="647" y="360" width="1" height="1"/><rect x="646" y="361" width="1" height="1"/><rect x="646" y="362" width="1" height="1"/><rect x="646" y="363" width="1" height="1"/><rect x="646" y="364" width="1" height="1"/><rect x="645" y="365" width="1" height="1"/><rect x="645" y="366" width="1" height="1"/><rect x="645" y="367" width="1" height="1"/><rect x="645" y="368" width="1" height="1"/><rect x="644" y="369" width="1" height="1"/><rect x="644" y="370" width="1" height="1"/><rect x="644" y="371" width="1" height="1"/><rect x="644" y="372" width="1" height="1"/><rect x="643" y="373" width="1" height="1"/><rect x="643" y="374" width="1" height="1"/><rect x="643" y="375" width="1" height="1"/><rect x="643" y="376" width="1" height="1"/><rect x="642" y="377" width="1" height="1"/><rect x="642" y="378" width="1" height="1"/><rect x="642" y="379" width="1" height="1"/><rect x="642" y="380" width="1" height="1"/><rect x="642" y="381" width="1" height="1"/><rect x="641" y="382" width="1" height="1"/><rect x="641" y="383" width="1" height="1"/><rect x="641" y="384" width="1" height="1"/><rect x="641" y="385" width="1" height="1"/><rect x="640" y="386" width="1" height="1"/><rect x="640" y="387" width="1" height="1"/><rect x="640" y="388" width="1" height="1"/><rect x="640" y="389" width="1" height="1"/><rect x="639" y="390" width="1" height="1"/><rect x="639" y="391" width="1" height="1"/><rect x="639" y="392" width="1" height="1"/><rect x="639" y="393" width="1" height="1"/><rect x="638" y="394" width="1" height="1"/><rect x="638" y="395" width="1" height="1"/><rect x="638" y="396" width="1" height="1"/><rect x="638" y="397" width="1" height="1"/><rect x="637" y="398" width="1" height="1"/><rect x="637" y="399" width="1" height="1"/><rect x="637" y="400" width="1" height="1"/><rect x="637" y="401" width="1" height="1"/><rect x="636" y="402" width="1" height="1"/><rect x="636" y="403" width="1" height="1"/><rect x="636" y="404" width="1" height="1"/><rect x="636" y="405" width="1" height="1"/><rect x="636" y="406" width="1" height="1"/><rect x="635" y="407" width="1" height="1"/><rect x="635" y="408" width="1" height="1"/><rect x="635" y="409" width="1" height="1"/><rect x="635" y="410" width="1" height="1"/><rect x="634" y="411" width="1" height="1"/><rect x="634" y="412" width="1" height="1"/><rect x="634" y="413" width="1" height="1"/><rect x="634" y="414" width="1" height="1"/><rect x="633" y="415" width="1" height="1"/><rect x="633" y="416" width="1" height="1"/><rect x="633" y="417" width="1" height="1"/><rect x="633" y="418" width="1" height="1"/><rect x="632" y="419" width="1" height="1"/><rect x="632" y="420" width="1" height="1"/><rect x="632" y="421" width="1" height="1"/><rect x="632" y="422" width="1" height="1"/><rect x="631" y="423" width="1" height="1"/><rect x="631" y="424" width="1" height="1"/><rect x="631" y="425" width="1" height="1"/><rect x="631" y="426" width="1" height="1"/><rect x="630" y="427" width="1" height="1"/><rect x="630" y="428" width="1" height="1"/><rect x="630" y="429" width="1" height="1"/><rect x="630" y="430" width="1" height="1"/><rect x="630" y="431" width="1" height="1"/><rect x="629" y="432" width="1" height="1"/><rect x="629" y="433" width="1" height="1"/><rect x="629" y="434" width="1" height="1"/><rect x="629" y="435" width="1" height="1"/><rect x="628" y="436" width="1" height="1"/><rect x="628" y="437" width="1" height="1"/><rect x="628" y="438" width="1" height="1"/><rect x="628" y="439" width="1" height="1"/><rect x="627" y="440" width="1" height="1"/><rect x="627" y="441" width="1" height="1"/><rect x="627" y="442" width="1" height="1"/><rect x="627" y="443" width="1" height="1"/><rect x="626" y="444" width="1" height="1"/><rect x="626" y="445" width="1" height="1"/><rect x="626" y="446" width="1" height="1"/><rect x="626" y="447" width="1" height="1"/><rect x="625" y="448" width="1" height="1"/><rect x="625" y="449" width="1" height="1"/><rect x="625" y="450" width="1" height="1"/><rect x="625" y="451" width="1" height="1"/><rect x="624" y="452" width="1" height="1"/><rect x="624" y="453" width="1" height="1"/><rect x="624" y="454" width="1" height="1"/><rect x="624" y="455" width="1" height="1"/><rect x="624" y="456" width="1" height="1"/><rect x="623" y="457" width="1" height="1"/><rect x="623" y="458" width="1" height="1"/><rect x="623" y="459" width="1" height="1"/><rect x="623" y="460" width="1" height="1"/><rect x="622" y="461" width="1" height="1"/><rect x="622" y="462" width="1" height="1"/><rect x="622" y="463" width="1" height="1"/><rect x="622" y="464" width="1" height="1"/><rect x="621" y="465" width="1" height="1"/><rect x="621" y="466" width="1" height="1"/><rect x="621" y="467" width="1" height="1"/><rect x="621" y="468" width="1" height="1"/><rect x="620" y="469" width="1" height="1"/><rect x="620" y="470" width="1" height="1"/><rect x="620" y="471" width="1" height="1"/><rect x="620" y="472" width="1" height="1"/><rect x="619" y="473" width="1" height="1"/><rect x="619" y="474" width="1" height="1"/><rect x="619" y="475" width="1" height="1"/><rect x="619" y="476" width="1" height="1"/><rect x="618" y="477" width="1" height="1"/><rect x="618" y="478" width="1" height="1"/><rect x="618" y="479" width="1" height="1"/><rect x="618" y="480" width="1" height="1"/><rect x="618" y="481" width="1" height="1"/><rect x="617" y="482" width="1" height="1"/><rect x="617" y="483" width="1" height="1"/><rect x="617" y="484" width="1" height="1"/><rect x="617" y="485" width="1" height="1"/><rect x="616" y="486" width="1" height="1"/><rect x="616" y="487" width="1" height="1"/><rect x="616" y="488" width="1" height="1"/><rect x="271" y="190" width="1" height="1"/><rect x="271" y="191" width="1" height="1"/><rect x="271" y="192" width="1" height="1"/><rect x="271" y="193" width="1" height="1"/><rect x="271" y="194" width="1" height="1"/><rect x="271" y="195" width="1" height="1"/><rect x="271" y="196" width="1" height="1"/><rect x="271" y="197" width="1" height="1"/><rect x="271" y="198" width="1" height="1"/><rect x="271" y="199" width="1" height="1"/><rect x="271" y="200" width="1" height="1"/><rect x="271" y="201" width="1" height="1"/><rect x="271" y="202" width="1" height="1"/><rect x="271" y="203" width="1" height="1"/><rect x="271" y="204" width="1" height="1"/><rect x="271" y="205" width="1" height="1"/><rect x="271" y="206" width="1" height="1"/><rect x="271" y="207" width="1" height="1"/><rect x="271" y="208" width="1" height="1"/><rect x="271" y="209" width="1" height="1"/><rect x="271" y="210" width="1" height="1"/><rect x="271" y="211" width="1" height="1"/><rect x="271" y="212" width="1" height="1"/><rect x="271" y="213" width="1" height="1"/><rect x="271" y="214" width="1" height="1"/><rect x="271" y="215" width="1" height="1"/><rect x="271" y="216" width="1" height="1"/><rect x="271" y="217" width="1" height="1"/><rect x="271" y="218" width="1" height="1"/><rect x="271" y="219" width="1" height="1"/><rect x="271" y="220" width="1" height="1"/><rect x="271" y="221" width="1" height="1"/><rect x="271" y="222" width="1" height="1"/><rect x="271" y="223" width="1" height="1"/><rect x="271" y="224" width="1" height="1"/><rect x="271" y="225" width="1" height="1"/><rect x="271" y="226" width="1" height="1"/><rect x="271" y="227" width="1" height="1"/><rect x="271" y="228" width="1" height="1"/><rect x="271" y="229" width="1" height="1"/><rect x="271" y="230" width="1" height="1"/><rect x="271" y="231" width="1" height="1"/><rect x="271" y="232" width="1" height="1"/><rect x="271" y="233" width="1" height="1"/><rect x="271" y="234" width="1" height="1"/><rect x="272" y="235" width="1" height="1"/><rect x="272" y="236" width="1" height="1"/><rect x="272" y="237" width="1" height="1"/><rect x="272" y="238" width="1" height="1"/><rect x="272" y="239" width="1" height="1"/><rect x="272" y="240" width="1" height="1"/><rect x="272" y="241" width="1" height="1"/><rect x="272" y="242" width="1" height="1"/><rect x="272" y="243" width="1" height="1"/><rect x="272" y="244" width="1" height="1"/><rect x="272" y="245" width="1" height="1"/><rect x="272" y="246" width="1" height="1"/><rect x="272" y="247" width="1" height="1"/><rect x="272" y="248" width="1" height="1"/><rect x="272" y="249" width="1" height="1"/><rect x="272" y="250" width="1" height="1"/><rect x="272" y="251" width="1" height="1"/><rect x="272" y="252" width="1" height="1"/><rect x="272" y="253" width="1" height="1"/><rect x="272" y="254" width="1" height="1"/><rect x="272" y="255" width="1" height="1"/><rect x="272" y="256" width="1" height="1"/><rect x="272" y="257" width="1" height="1"/><rect x="272" y="258" width="1" height="1"/><rect x="272" y="259" width="1" height="1"/><rect x="272" y="260" width="1" height="1"/><rect x="272" y="261" width="1" height="1"/><rect x="272" y="262" width="1" height="1"/><rect x="272" y="263" width="1" height="1"/><rect x="272" y="264" width="1" height="1"/><rect x="272" y="265" width="1" height="1"/><rect x="272" y="266" width="1" height="1"/><rect x="272" y="267" width="1" height="1"/><rect x="272" y="268" width="1" height="1"/><rect x="272" y="269" width="1" height="1"/><rect x="272" y="270" width="1" height="1"/><rect x="272" y="271" width="1" height="1"/><rect x="272" y="272" width="1" height="1"/><rect x="272" y="273" width="1" height="1"/><rect x="272" y="274" width="1" height="1"/><rect x="272" y="275" width="1" height="1"/><rect x="272" y="276" width="1" height="1"/><rect x="272" y="277" width="1" height="1"/><rect x="272" y="278" width="1" height="1"/><rect x="272" y="279" width="1" height="1"/><rect x="272" y="280" width="1" height="1"/><rect x="272" y="281" width="1" height="1"/><rect x="272" y="282" width="1" height="1"/><rect x="272" y="283" width="1" height="1"/><rect x="272" y="284" width="1" height="1"/><rect x="272" y="285" width="1" height="1"/><rect x="272" y="286" width="1" height="1"/><rect x="272" y="287" width="1" height="1"/><rect x="272" y="288" width="1" height="1"/><rect x="272" y="289" width="1" height="1"/><rect x="272" y="290" width="1" height="1"/><rect x="272" y="291" width="1" height="1"/><rect x="272" y="292" width="1" height="1"/><rect x="272" y="293" width="1" height="1"/><rect x="272" y="294" width="1" height="1"/><rect x="272" y="295" width="1" height="1"/><rect x="272" y="296" width="1" height="1"/><rect x="272" y="297" width="1" height="1"/><rect x="272" y="298" width="1" height="1"/><rect x="272" y="299" width="1" height="1"/><rect x="272" y="300" width="1" height="1"/><rect x="272" y="301" width="1" height="1"/><rect x="272" y="302" width="1" height="1"/><rect x="272" y="303" width="1" height="1"/><rect x="272" y="304" width="1" height="1"/><rect x="272" y="305" width="1" height="1"/><rect x="272" y="306" width="1" height="1"/><rect x="272" y="307" width="1" height="1"/><rect x="272" y="308" width="1" height="1"/><rect x="272" y="309" width="1" height="1"/><rect x="272" y="310" width="1" height="1"/><rect x="272" y="311" width="1" height="1"/><rect x="272" y="312" width="1" height="1"/><rect x="272" y="313" width="1" height="1"/><rect x="272" y="314" width="1" height="1"/><rect x="272" y="315" width="1" height="1"/><rect x="272" y="316" width="1" height="1"/><rect x="272" y="317" width="1" height="1"/><rect x="272" y="318" width="1" height="1"/><rect x="272" y="319" width="1" height="1"/><rect x="272" y="320" width="1" height="1"/><rect x="272" y="321" width="1" height="1"/><rect x="272" y="322" width="1" height="1"/><rect x="272" y="323" width="1" height="1"/><rect x="272" y="324" width="1" height="1"/><rect x="272" y="325" width="1" height="1"/><rect x="272" y="326" width="1" height="1"/><rect x="272" y="327" width="1" height="1"/><rect x="272" y="328" width="1" height="1"/><rect x="272" y="329" width="1" height="1"/><rect x="272" y="330" width="1" height="1"/><rect x="272" y="331" width="1" height="1"/><rect x="272" y="332" width="1" height="1"/><rect x="272" y="333" width="1" height="1"/><rect x="272" y="334" width="1" height="1"/><rect x="272" y="335" width="1" height="1"/><rect x="272" y="336" width="1" height="1"/><rect x="272" y="337" width="1" height="1"/><rect x="272" y="338" width="1" height="1"/><rect x="272" y="339" width="1" height="1"/><rect x="272" y="340" width="1" height="1"/><rect x="272" y="341" width="1" height="1"/><rect x="272" y="342" width="1" height="1"/><rect x="272" y="343" width="1" height="1"/><rect x="272" y="344" width="1" height="1"/><rect x="272" y="345" width="1" height="1"/><rect x="272" y="346" width="1" height="1"/><rect x="272" y="347" width="1" height="1"/><rect x="272" y="348" width="1" height="1"/><rect x="272" y="349" width="1" height="1"/><rect x="272" y="350" width="1" height="1"/><rect x="272" y="351" width="1" height="1"/><rect x="272" y="352" width="1" height="1"/><rect x="272" y="353" width="1" height="1"/><rect x="272" y="354" width="1" height="1"/><rect x="272" y="355" width="1" height="1"/><rect x="272" y="356" width="1" height="1"/><rect x="272" y="357" width="1" height="1"/><rect x="272" y="358" width="1" height="1"/><rect x="272" y="359" width="1" height="1"/><rect x="272" y="360" width="1" height="1"/><rect x="272" y="361" width="1" height="1"/><rect x="272" y="362" width="1" height="1"/><rect x="272" y="363" width="1" height="1"/><rect x="272" y="364" width="1" height="1"/><rect x="272" y="365" width="1" height="1"/><rect x="272" y="366" width="1" height="1"/><rect x="272" y="367" width="1" height="1"/><rect x="272" y="368" width="1" height="1"/><rect x="272" y="369" width="1" height="1"/><rect x="272" y="370" width="1" height="1"/><rect x="272" y="371" width="1" height="1"/><rect x="272" y="372" width="1" height="1"/><rect x="272" y="373" width="1" height="1"/><rect x="272" y="374" width="1" height="1"/><rect x="272" y="375" width="1" height="1"/><rect x="272" y="376" width="1" height="1"/><rect x="272" y="377" width="1" height="1"/><rect x="272" y="378" width="1" height="1"/><rect x="272" y="379" width="1" height="1"/><rect x="272" y="380" width="1" height="1"/><rect x="272" y="381" width="1" height="1"/><rect x="272" y="382" width="1" height="1"/><rect x="272" y="383" width="1" height="1"/><rect x="272" y="384" width="1" height="1"/><rect x="272" y="385" width="1" height="1"/><rect x="272" y="386" width="1" height="1"/><rect x="272" y="387" width="1" height="1"/><rect x="272" y="388" width="1" height="1"/><rect x="272" y="389" width="1" height="1"/><rect x="272" y="390" width="1" height="1"/><rect x="272" y="391" width="1" height="1"/><rect x="272" y="392" width="1" height="1"/><rect x="272" y="393" width="1" height="1"/><rect x="272" y="394" width="1" height="1"/><rect x="272" y="395" width="1" height="1"/><rect x="272" y="396" width="1" height="1"/><rect x="272" y="397" width="1" height="1"/><rect x="272" y="398" width="1" height="1"/><rect x="272" y="399" width="1" height="1"/><rect x="272" y="400" width="1" height="1"/><rect x="272" y="401" width="1" height="1"/><rect x="272" y="402" width="1" height="1"/><rect x="272" y="403" width="1" height="1"/><rect x="272" y="404" width="1" height="1"/><rect x="272" y="405" width="1" height="1"/><rect x="272" y="406" width="1" height="1"/><rect x="272" y="407" width="1" height="1"/><rect x="272" y="408" width="1" height="1"/><rect x="272" y="409" width="1" height="1"/><rect x="272" y="410" width="1" height="1"/><rect x="272" y="411" width="1" height="1"/><rect x="272" y="412" width="1" height="1"/><rect x="272" y="413" width="1" height="1"/><rect x="272" y="414" width="1" height="1"/><rect x="272" y="415" width="1" height="1"/><rect x="272" y="416" width="1" height="1"/><rect x="272" y="417" width="1" height="1"/><rect x="272" y="418" width="1" height="1"/><rect x="272" y="419" width="1" height="1"/><rect x="272" y="420" width="1" height="1"/><rect x="272" y="421" width="1" height="1"/><rect x="272" y="422" width="1" height="1"/><rect x="272" y="423" width="1" height="1"/><rect x="272" y="424" width="1" height="1"/><rect x="272" y="425" width="1" height="1"/><rect x="272" y="426" width="1" height="1"/><rect x="272" y="427" width="1" height="1"/><rect x="272" y="428" width="1" height="1"/><rect x="272" y="429" width="1" height="1"/><rect x="272" y="430" width="1" height="1"/><rect x="272" y="431" width="1" height="1"/><rect x="272" y="432" width="1" height="1"/><rect x="272" y="433" width="1" height="1"/><rect x="272" y="434" width="1" height="1"/><rect x="272" y="435" width="1" height="1"/><rect x="272" y="436" width="1" height="1"/><rect x="272" y="437" width="1" height="1"/><rect x="272" y="438" width="1" height="1"/><rect x="272" y="439" width="1" height="1"/><rect x="272" y="440" width="1" height="1"/><rect x="272" y="441" width="1" height="1"/><rect x="272" y="442" width="1" height="1"/><rect x="272" y="443" width="1" height="1"/><rect x="272" y="444" width="1" height="1"/><rect x="272" y="445" width="1" height="1"/><rect x="272" y="446" width="1" height="1"/><rect x="272" y="447" width="1" height="1"/><rect x="272" y="448" width="1" height="1"/><rect x="272" y="449" width="1" height="1"/><rect x="272" y="450" width="1" height="1"/><rect x="272" y="451" width="1" height="1"/><rect x="273" y="452" width="1" height="1"/><rect x="273" y="453" width="1" height="1"/><rect x="273" y="454" width="1" height="1"/><rect x="273" y="455" width="1" height="1"/><rect x="273" y="456" width="1" height="1"/><rect x="273" y="457" width="1" height="1"/><rect x="273" y="458" width="1" height="1"/><rect x="273" y="459" width="1" height="1"/><rect x="273" y="460" width="1" height="1"/><rect x="273" y="461" width="1" height="1"/><rect x="273" y="462" width="1" height="1"/><rect x="273" y="463" width="1" height="1"/><rect x="273" y="464" width="1" height="1"/><rect x="273" y="465" width="1" height="1"/><rect x="273" y="466" width="1" height="1"/><rect x="273" y="467" width="1" height="1"/><rect x="273" y="468" width="1" height="1"/><rect x="273" y="469" width="1" height="1"/><rect x="273" y="470" width="1" height="1"/><rect x="273" y="471" width="1" height="1"/><rect x="273" y="472" width="1" height="1"/><rect x="273" y="473" width="1" height="1"/><rect x="273" y="474" width="1" height="1"/><rect x="273" y="475" width="1" height="1"/><rect x="273" y="476" width="1" height="1"/><rect x="273" y="477" width="1" height="1"/><rect x="273" y="478" width="1" height="1"/><rect x="273" y="479" width="1" height="1"/><rect x="273" y="480" width="1" height="1"/><rect x="273" y="481" width="1" height="1"/><rect x="273" y="482" width="1" height="1"/><rect x="273" y="483" width="1" height="1"/><rect x="273" y="484" width="1" height="1"/><rect x="273" y="485" width="1" height="1"/><rect x="273" y="486" width="1" height="1"/><rect x="273" y="487" width="1" height="1"/><rect x="273" y="488" width="1" height="1"/><rect x="273" y="489" width="1" height="1"/><rect x="273" y="490" width="1" height="1"/><rect x="273" y="491" width="1" height="1"/><rect x="273" y="492" width="1" height="1"/><rect x="273" y="493" width="1" height="1"/><rect x="273" y="494" width="1" height="1"/><rect x="273" y="495" width="1" height="1"/><rect x="273" y="496" width="1" height="1"/><rect x="273" y="497" width="1" height="1"/><rect x="273" y="498" width="1" height="1"/><rect x="273" y="499" width="1" height="1"/><rect x="273" y="500" width="1" height="1"/><rect x="273" y="501" width="1" height="1"/><rect x="273" y="502" width="1" height="1"/><rect x="273" y="503" width="1" height="1"/><rect x="273" y="504" width="1" height="1"/><rect x="273" y="505" width="1" height="1"/><rect x="273" y="506" width="1" height="1"/><rect x="273" y="507" width="1" height="1"/><rect x="273" y="508" width="1" height="1"/><rect x="273" y="509" width="1" height="1"/><rect x="273" y="510" width="1" height="1"/><rect x="273" y="511" width="1" height="1"/><rect x="273" y="512" width="1" height="1"/><rect x="273" y="513" width="1" height="1"/><rect x="273" y="514" width="1" height="1"/><rect x="273" y="515" width="1" height="1"/><rect x="273" y="516" width="1" height="1"/><rect x="273" y="517" width="1" height="1"/><rect x="273" y="518" width="1" height="1"/><rect x="273" y="519" width="1" height="1"/><rect x="273" y="520" width="1" height="1"/><rect x="273" y="521" width="1" height="1"/><rect x="273" y="522" width="1" height="1"/><rect x="273" y="523" width="1" height="1"/><rect x="273" y="524" width="1" height="1"/><rect x="273" y="525" width="1" height="1"/><rect x="273" y="526" width="1" height="1"/><rect x="273" y="527" width="1" height="1"/><rect x="273" y="528" width="1" height="1"/><rect x="273" y="529" width="1" height="1"/><rect x="273" y="530" width="1" height="1"/><rect x="190" y="362" width="6" height="1"/><rect x="196" y="361" width="6" height="1"/><rect x="202" y="360" width="6" height="1"/><rect x="208" y="359" width="6" height="1"/><rect x="214" y="358" width="6" height="1"/><rect x="220" y="357" width="6" height="1"/><rect x="226" y="356" width="6" height="1"/><rect x="232" y="355" width="6" height="1"/><rect x="238" y="354" width="6" height="1"/><rect x="244" y="353" width="6" height="1"/><rect x="250" y="352" width="6" height="1"/><rect x="256" y="351" width="5" height="1"/><rect x="261" y="350" width="6" height="1"/><rect x="267" y="349" width="6" height="1"/><rect x="273" y="348" width="6" height="1"/><rect x="279" y="347" width="6" height="1"/><rect x="285" y="346" width="6" height="1"/><rect x="291" y="345" width="6" height="1"/><rect x="297" y="344" width="6" height="1"/><rect x="303" y="343" width="6" height="1"/><rect x="309" y="342" width="6" height="1"/><rect x="315" y="341" width="6" height="1"/><rect x="321" y="340" width="6" height="1"/><rect x="327" y="339" width="6" height="1"/><rect x="333" y="338" width="6" height="1"/><rect x="339" y="337" width="5" height="1"/><rect x="344" y="336" width="6" height="1"/><rect x="350" y="335" width="6" height="1"/><rect x="356" y="334" width="6" height="1"/><rect x="362" y="333" width="6" height="1"/><rect x="368" y="332" width="6" height="1"/><rect x="374" y="331" width="6" height="1"/><rect x="380" y="330" width="6" height="1"/><rect x="386" y="329" width="6" height="1"/><rect x="392" y="328" width="6" height="1"/><rect x="398" y="327" width="6" height="1"/><rect x="404" y="326" width="6" height="1"/><rect x="410" y="325" width="6" height="1"/><rect x="416" y="324" width="6" height="1"/><rect x="422" y="323" width="5" height="1"/><rect x="427" y="322" width="6" height="1"/><rect x="433" y="321" width="6" height="1"/><rect x="439" y="320" width="6" height="1"/><rect x="445" y="319" width="6" height="1"/><rect x="451" y="318" width="5" height="1"/><rect x="455" y="318" width="1" height="1"/><rect x="456" y="319" width="1" height="1"/><rect x="457" y="320" width="1" height="1"/><rect x="458" y="321" width="1" height="1"/><rect x="459" y="322" width="1" height="1"/><rect x="460" y="323" width="1" height="1"/><rect x="461" y="324" width="1" height="1"/><rect x="462" y="325" width="1" height="1"/><rect x="463" y="326" width="1" height="1"/><rect x="464" y="327" width="1" height="1"/><rect x="465" y="328" width="1" height="1"/><rect x="466" y="329" width="1" height="1"/><rect x="467" y="330" width="1" height="1"/><rect x="468" y="331" width="1" height="1"/><rect x="469" y="332" width="1" height="1"/><rect x="469" y="333" width="1" height="1"/><rect x="470" y="334" width="1" height="1"/><rect x="471" y="335" width="1" height="1"/><rect x="472" y="336" width="1" height="1"/><rect x="473" y="337" width="1" height="1"/><rect x="474" y="338" width="1" height="1"/><rect x="475" y="339" width="1" height="1"/><rect x="476" y="340" width="1" height="1"/><rect x="477" y="341" width="1" height="1"/><rect x="478" y="342" width="1" height="1"/><rect x="479" y="343" width="1" height="1"/><rect x="480" y="344" width="1" height="1"/><rect x="481" y="345" width="1" height="1"/><rect x="482" y="346" width="1" height="1"/><rect x="483" y="347" width="1" height="1"/><rect x="484" y="348" width="1" height="1"/><rect x="485" y="349" width="1" height="1"/><rect x="486" y="350" width="1" height="1"/><rect x="486" y="351" width="1" height="1"/><rect x="487" y="352" width="1" height="1"/><rect x="488" y="353" width="1" height="1"/><rect x="489" y="354" width="1" height="1"/><rect x="490" y="355" width="1" height="1"/><rect x="491" y="356" width="1" height="1"/><rect x="492" y="357" width="1" height="1"/><rect x="493" y="358" width="1" height="1"/><rect x="494" y="359" width="1" height="1"/><rect x="495" y="360" width="1" height="1"/><rect x="496" y="361" width="1" height="1"/><rect x="497" y="362" width="1" height="1"/><rect x="498" y="363" width="1" height="1"/><rect x="499" y="364" width="1" height="1"/><rect x="500" y="365" width="1" height="1"/><rect x="501" y="366" width="1" height="1"/><rect x="502" y="367" width="1" height="1"/><rect x="502" y="368" width="1" height="1"/><rect x="503" y="369" width="1" height="1"/><rect x="504" y="370" width="1" height="1"/><rect x="505" y="371" width="1" height="1"/><rect x="506" y="372" width="1" height="1"/><rect x="507" y="373" width="1" height="1"/><rect x="508" y="374" width="1" height="1"/><rect x="509" y="375" width="1" height="1"/><rect x="510" y="376" width="1" height="1"/><rect x="511" y="377" width="1" height="1"/><rect x="512" y="378" width="1" height="1"/><rect x="513" y="379" width="1" height="1"/><rect x="514" y="380" width="1" height="1"/><rect x="515" y="381" width="1" height="1"/><rect x="516" y="382" width="1" height="1"/><rect x="517" y="383" width="1" height="1"/><rect x="518" y="384" width="1" height="1"/><rect x="519" y="385" width="1" height="1"/><rect x="519" y="386" width="1" height="1"/><rect x="520" y="387" width="1" height="1"/><rect x="521" y="388" width="1" height="1"/><rect x="522" y="389" width="1" height="1"/><rect x="523" y="390" width="1" height="1"/><rect x="524" y="391" width="1" height="1"/><rect x="525" y="392" width="1" height="1"/><rect x="526" y="393" width="1" height="1"/><rect x="527" y="394" width="1" height="1"/><rect x="528" y="395" width="1" height="1"/><rect x="529" y="396" width="1" height="1"/><rect x="530" y="397" width="1" height="1"/><rect x="531" y="398" width="1" height="1"/><rect x="532" y="399" width="1" height="1"/><rect x="533" y="400" width="1" height="1"/><rect x="534" y="401" width="1" height="1"/><rect x="535" y="402" width="1" height="1"/><rect x="535" y="403" width="1" height="1"/><rect x="536" y="404" width="1" height="1"/><rect x="537" y="405" width="1" height="1"/><rect x="538" y="406" width="1" height="1"/><rect x="539" y="407" width="1" height="1"/><rect x="540" y="408" width="1" height="1"/><rect x="541" y="409" width="1" height="1"/><rect x="542" y="410" width="1" height="1"/><rect x="543" y="411" width="1" height="1"/><rect x="544" y="412" width="1" height="1"/><rect x="545" y="413" width="1" height="1"/><rect x="546" y="414" width="1" height="1"/><rect x="547" y="415" width="1" height="1"/><rect x="548" y="416" width="1" height="1"/><rect x="549" y="417" width="1" height="1"/><rect x="550" y="418" width="1" height="1"/><rect x="551" y="419" width="1" height="1"/><rect x="552" y="420" width="1" height="1"/><rect x="552" y="421" width="1" height="1"/><rect x="553" y="422" width="1" height="1"/><rect x="554" y="423" width="1" height="1"/><rect x="555" y="424" width="1" height="1"/><rect x="556" y="425" width="1" height="1"/><rect x="557" y="426" width="1" height="1"/><rect x="558" y="427" width="1" height="1"/><rect x="559" y="428" width="1" height="1"/><rect x="560" y="429" width="1" height="1"/><rect x="561" y="430" width="1" height="1"/><rect x="562" y="431" width="1" height="1"/><rect x="563" y="432" width="1" height="1"/><rect x="564" y="433" width="1" height="1"/><rect x="565" y="434" width="1" height="1"/><rect x="566" y="435" width="1" height="1"/><rect x="567" y="436" width="1" height="1"/><rect x="568" y="437" width="1" height="1"/><rect x="568" y="438" width="1" height="1"/><rect x="569" y="439" width="1" height="1"/><rect x="570" y="440" width="1" height="1"/><rect x="571" y="441" width="1" height="1"/><rect x="572" y="442" width="1" height="1"/><rect x="573" y="443" width="1" height="1"/><rect x="574" y="444" width="1" height="1"/><rect x="575" y="445" width="1" height="1"/><rect x="576" y="446" width="1" height="1"/><rect x="577" y="447" width="1" height="1"/><rect x="578" y="448" width="1" height="1"/><rect x="579" y="449" width="1" height="1"/><rect x="580" y="450" width="1" height="1"/><rect x="581" y="451" width="1" height="1"/><rect x="582" y="452" width="1" height="1"/><rect x="583" y="453" width="1" height="1"/><rect x="584" y="454" width="1" height="1"/><rect x="585" y="455" width="1" height="1"/><rect x="585" y="456" width="1" height="1"/><rect x="586" y="457" width="1" height="1"/><rect x="587" y="458" width="1" height="1"/><rect x="588" y="459" width="1" height="1"/><rect x="589" y="460" width="1" height="1"/><rect x="590" y="461" width="1" height="1"/><rect x="591" y="462" width="1" height="1"/><rect x="592" y="463" width="1" height="1"/><rect x="593" y="464" width="1" height="1"/><rect x="594" y="465" width="1" height="1"/><rect x="595" y="466" width="1" height="1"/><rect x="596" y="467" width="1" height="1"/><rect x="597" y="468" width="1" height="1"/><rect x="598" y="469" width="1" height="1"/><rect x="599" y="470" width="1" height="1"/><rect x="600" y="471" width="1" height="1"/><rect x="601" y="472" width="1" height="1"/><rect x="601" y="473" width="1" height="1"/><rect x="602" y="474" width="1" height="1"/><rect x="603" y="475" width="1" height="1"/><rect x="604" y="476" width="1" height="1"/><rect x="605" y="477" width="1" height="1"/><rect x="606" y="478" width="1" height="1"/><rect x="607" y="479" width="1" height="1"/><rect x="608" y="480" width="1" height="1"/><rect x="609" y="481" width="1" height="1"/><rect x="610" y="482" width="1" height="1"/><rect x="611" y="483" width="1" height="1"/><rect x="612" y="484" width="1" height="1"/><rect x="613" y="485" width="1" height="1"/><rect x="614" y="486" width="1" height="1"/><rect x="615" y="487" width="1" height="1"/><rect x="616" y="488" width="1" height="1"/><rect x="464" y="530" width="4" height="1"/><rect x="468" y="529" width="4" height="1"/><rect x="472" y="528" width="3" height="1"/><rect x="475" y="527" width="4" height="1"/><rect x="479" y="526" width="3" height="1"/><rect x="482" y="525" width="4" height="1"/><rect x="486" y="524" width="4" height="1"/><rect x="490" y="523" width="3" height="1"/><rect x="493" y="522" width="4" height="1"/><rect x="497" y="521" width="3" height="1"/><rect x="500" y="520" width="4" height="1"/><rect x="504" y="519" width="3" height="1"/><rect x="507" y="518" width="4" height="1"/><rect x="511" y="517" width="4" height="1"/><rect x="515" y="516" width="3" height="1"/><rect x="518" y="515" width="4" height="1"/><rect x="522" y="514" width="3" height="1"/><rect x="525" y="513" width="4" height="1"/><rect x="529" y="512" width="4" height="1"/><rect x="533" y="511" width="3" height="1"/><rect x="536" y="510" width="4" height="1"/><rect x="540" y="509" width="3" height="1"/><rect x="543" y="508" width="4" height="1"/><rect x="547" y="507" width="4" height="1"/><rect x="551" y="506" width="3" height="1"/><rect x="554" y="505" width="4" height="1"/><rect x="558" y="504" width="3" height="1"/><rect x="561" y="503" width="4" height="1"/><rect x="565" y="502" width="3" height="1"/><rect x="568" y="501" width="4" height="1"/><rect x="572" y="500" width="4" height="1"/><rect x="576" y="499" width="3" height="1"/><rect x="579" y="498" width="4" height="1"/><rect x="583" y="497" width="3" height="1"/><rect x="586" y="496" width="4" height="1"/><rect x="590" y="495" width="4" height="1"/><rect x="594" y="494" width="3" height="1"/><rect x="597" y="493" width="4" height="1"/><rect x="601" y="492" width="3" height="1"/><rect x="604" y="491" width="4" height="1"/><rect x="608" y="490" width="4" height="1"/><rect x="612" y="489" width="3" height="1"/><rect x="615" y="488" width="2" height="1"/><rect x="190" y="363" width="1" height="1"/><rect x="190" y="364" width="1" height="1"/><rect x="191" y="365" width="1" height="1"/><rect x="191" y="366" width="1" height="1"/><rect x="191" y="367" width="1" height="1"/><rect x="192" y="368" width="1" height="1"/><rect x="192" y="369" width="1" height="1"/><rect x="192" y="370" width="1" height="1"/><rect x="193" y="371" width="1" height="1"/><rect x="193" y="372" width="1" height="1"/><rect x="194" y="373" width="1" height="1"/><rect x="194" y="374" width="1" height="1"/><rect x="194" y="375" width="1" height="1"/><rect x="195" y="376" width="1" height="1"/><rect x="195" y="377" width="1" height="1"/><rect x="195" y="378" width="1" height="1"/><rect x="196" y="379" width="1" height="1"/><rect x="196" y="380" width="1" height="1"/><rect x="197" y="381" width="1" height="1"/><rect x="197" y="382" width="1" height="1"/><rect x="197" y="383" width="1" height="1"/><rect x="198" y="384" width="1" height="1"/><rect x="198" y="385" width="1" height="1"/><rect x="198" y="386" width="1" height="1"/><rect x="199" y="387" width="1" height="1"/><rect x="199" y="388" width="1" height="1"/><rect x="200" y="389" width="1" height="1"/><rect x="200" y="390" width="1" height="1"/><rect x="200" y="391" width="1" height="1"/><rect x="201" y="392" width="1" height="1"/><rect x="201" y="393" width="1" height="1"/><rect x="201" y="394" width="1" height="1"/><rect x="202" y="395" width="1" height="1"/><rect x="202" y="396" width="1" height="1"/><rect x="203" y="397" width="1" height="1"/><rect x="203" y="398" width="1" height="1"/><rect x="203" y="399" width="1" height="1"/><rect x="204" y="400" width="1" height="1"/><rect x="204" y="401" width="1" height="1"/><rect x="205" y="402" width="1" height="1"/><rect x="205" y="403" width="1" height="1"/><rect x="205" y="404" width="1" height="1"/><rect x="206" y="405" width="1" height="1"/><rect x="206" y="406" width="1" height="1"/><rect x="206" y="407" width="1" height="1"/><rect x="207" y="408" width="1" height="1"/><rect x="207" y="409" width="1" height="1"/><rect x="208" y="410" width="1" height="1"/><rect x="208" y="411" width="1" height="1"/><rect x="208" y="412" width="1" height="1"/><rect x="209" y="413" width="1" height="1"/><rect x="209" y="414" width="1" height="1"/><rect x="209" y="415" width="1" height="1"/><rect x="210" y="416" width="1" height="1"/><rect x="210" y="417" width="1" height="1"/><rect x="211" y="418" width="1" height="1"/><rect x="211" y="419" width="1" height="1"/><rect x="211" y="420" width="1" height="1"/><rect x="212" y="421" width="1" height="1"/><rect x="212" y="422" width="1" height="1"/><rect x="212" y="423" width="1" height="1"/><rect x="213" y="424" width="1" height="1"/><rect x="213" y="425" width="1" height="1"/><rect x="214" y="426" width="1" height="1"/><rect x="214" y="427" width="1" height="1"/><rect x="214" y="428" width="1" height="1"/><rect x="215" y="429" width="1" height="1"/><rect x="215" y="430" width="1" height="1"/><rect x="215" y="431" width="1" height="1"/><rect x="216" y="432" width="1" height="1"/><rect x="216" y="433" width="1" height="1"/><rect x="217" y="434" width="1" height="1"/><rect x="217" y="435" width="1" height="1"/><rect x="217" y="436" width="1" height="1"/><rect x="218" y="437" width="1" height="1"/><rect x="218" y="438" width="1" height="1"/><rect x="218" y="439" width="1" height="1"/><rect x="219" y="440" width="1" height="1"/><rect x="219" y="441" width="1" height="1"/><rect x="220" y="442" width="1" height="1"/><rect x="220" y="443" width="1" height="1"/><rect x="220" y="444" width="1" height="1"/><rect x="221" y="445" width="1" height="1"/><rect x="221" y="446" width="1" height="1"/><rect x="222" y="447" width="1" height="1"/><rect x="222" y="448" width="1" height="1"/><rect x="222" y="449" width="1" height="1"/><rect x="223" y="450" width="1" height="1"/><rect x="223" y="451" width="1" height="1"/><rect x="223" y="452" width="1" height="1"/><rect x="224" y="453" width="1" height="1"/><rect x="224" y="454" width="1" height="1"/><rect x="225" y="455" width="1" height="1"/><rect x="225" y="456" width="1" height="1"/><rect x="225" y="457" width="1" height="1"/><rect x="226" y="458" width="1" height="1"/><rect x="226" y="459" width="1" height="1"/><rect x="226" y="460" width="1" height="1"/><rect x="227" y="461" width="1" height="1"/><rect x="227" y="462" width="1" height="1"/><rect x="228" y="463" width="1" height="1"/><rect x="228" y="464" width="1" height="1"/><rect x="228" y="465" width="1" height="1"/><rect x="229" y="466" width="1" height="1"/><rect x="229" y="467" width="1" height="1"/><rect x="229" y="468" width="1" height="1"/><rect x="230" y="469" width="1" height="1"/><rect x="230" y="470" width="1" height="1"/><rect x="231" y="471" width="1" height="1"/><rect x="231" y="472" width="1" height="1"/><rect x="231" y="473" width="1" height="1"/><rect x="232" y="474" width="1" height="1"/><rect x="232" y="475" width="1" height="1"/><rect x="232" y="476" width="1" height="1"/><rect x="233" y="477" width="1" height="1"/><rect x="233" y="478" width="1" height="1"/><rect x="234" y="479" width="1" height="1"/><rect x="234" y="480" width="1" height="1"/><rect x="234" y="481" width="1" height="1"/><rect x="235" y="482" width="1" height="1"/><rect x="235" y="483" width="1" height="1"/><rect x="235" y="484" width="1" height="1"/><rect x="236" y="485" width="1" height="1"/><rect x="236" y="486" width="1" height="1"/><rect x="237" y="487" width="1" height="1"/><rect x="237" y="488" width="1" height="1"/><rect x="237" y="489" width="1" height="1"/><rect x="238" y="490" width="1" height="1"/><rect x="238" y="491" width="1" height="1"/><rect x="238" y="492" width="1" height="1"/><rect x="239" y="493" width="1" height="1"/><rect x="239" y="494" width="1" height="1"/><rect x="240" y="495" width="1" height="1"/><rect x="240" y="496" width="1" height="1"/><rect x="240" y="497" width="1" height="1"/><rect x="241" y="498" width="1" height="1"/><rect x="241" y="499" width="1" height="1"/><rect x="242" y="500" width="1" height="1"/><rect x="242" y="501" width="1" height="1"/><rect x="242" y="502" width="1" height="1"/><rect x="243" y="503" width="1" height="1"/><rect x="243" y="504" width="1" height="1"/><rect x="243" y="505" width="1" height="1"/><rect x="244" y="506" width="1" height="1"/><rect x="244" y="507" width="1" height="1"/><rect x="245" y="508" width="1" height="1"/><rect x="245" y="509" width="1" height="1"/><rect x="245" y="510" width="1" height="1"/><rect x="246" y="511" width="1" height="1"/><rect x="246" y="512" width="1" height="1"/><rect x="246" y="513" width="1" height="1"/><rect x="247" y="514" width="1" height="1"/><rect x="247" y="515" width="1" height="1"/><rect x="248" y="516" width="1" height="1"/><rect x="248" y="517" width="1" height="1"/><rect x="248" y="518" width="1" height="1"/><rect x="249" y="519" width="1" height="1"/><rect x="249" y="520" width="1" height="1"/><rect x="249" y="521" width="1" height="1"/><rect x="250" y="522" width="1" height="1"/><rect x="250" y="523" width="1" height="1"/><rect x="251" y="524" width="1" height="1"/><rect x="251" y="525" width="1" height="1"/><rect x="251" y="526" width="1" height="1"/><rect x="252" y="527" width="1" height="1"/><rect x="252" y="528" width="1" height="1"/><rect x="252" y="529" width="1" height="1"/><rect x="253" y="530" width="1" height="1"/></g>
<g stroke="#ffffff" stroke-width="1" stroke-linejoin="round" shape-rendering="crispEdges"><polygon points="390.72,167.26 409.86,168.31 409.41,169.05 391.52,168.06" fill="rgb(240,240,245)"/><polygon points="409.86,168.31 428.55,171.03 426.89,171.60 409.41,169.05" fill="rgb(200,140,60)"/><polygon points="372.16,167.94 390.72,167.26 391.52,168.06 374.16,168.71" fill="rgb(230,230,235)"/><polygon points="391.52,168.06 409.41,169.05 408.89,170.79 392.25,169.87" fill="rgb(70,130,210)"/><polygon points="392.58,202.86 405.32,203.53 403.35,230.08 390.85,229.43" fill="rgb(200,200,200)"/><polygon points="405.32,203.53 417.73,205.45 415.52,232.03 403.35,230.08" fill="rgb(85,40,0)"/><polygon points="409.41,169.05 426.89,171.60 425.13,173.16 408.89,170.79" fill="rgb(160,100,40)"/><polygon points="428.55,171.03 445.80,175.30 443.00,175.60 426.89,171.60" fill="rgb(30,140,50)"/><polygon points="380.26,203.46 392.58,202.86 390.85,229.43 378.76,230.13" fill="rgb(110,150,170)"/><polygon points="374.16,168.71 391.52,168.06 392.25,169.87 376.13,170.48" fill="rgb(225,225,230)"/><polygon points="355.17,170.35 372.16,167.94 374.16,168.71 358.31,170.97" fill="rgb(235,205,40)"/><polygon points="392.25,169.87 408.89,170.79 408.38,172.48 392.97,171.64" fill="rgb(60,120,210)"/><polygon points="417.73,205.45 429.09,208.49 426.65,235.18 415.52,232.03" fill="rgb(5,65,15)"/><polygon points="408.89,170.79 425.13,173.16 423.41,174.69 408.38,172.48" fill="rgb(130,80,30)"/><polygon points="426.89,171.60 443.00,175.60 440.08,176.89 425.13,173.16" fill="rgb(20,120,40)"/><polygon points="369.08,205.32 380.26,203.46 378.76,230.13 367.78,232.15" fill="rgb(80,75,15)"/><polygon points="376.13,170.48 392.25,169.87 392.97,171.64 378.06,172.21" fill="rgb(200,200,230)"/><polygon points="358.31,170.97 374.16,168.71 376.13,170.48 361.44,172.60" fill="rgb(230,190,40)"/><polygon points="316.30,360.91 312.30,349.67 307.80,329.55 312.01,341.18" fill="rgb(110,55,20)"/><polygon points="392.97,171.64 408.38,172.48 407.77,175.25 393.66,174.49" fill="rgb(90,150,220)"/><polygon points="393.97,180.47 407.00,181.17 405.32,203.53 392.58,202.86" fill="rgb(205,205,205)"/><polygon points="408.38,172.48 423.41,174.69 421.53,177.28 407.77,175.25" fill="rgb(110,60,20)"/><polygon points="425.13,173.16 440.08,176.89 437.22,178.15 423.41,174.69" fill="rgb(20,100,35)"/><polygon points="407.00,181.17 419.71,183.07 417.73,205.45 405.32,203.53" fill="rgb(85,40,0)"/><polygon points="445.80,175.30 460.63,180.93 456.81,180.86 443.00,175.60" fill="rgb(75,105,150)"/><polygon points="429.09,208.49 438.72,212.52 436.07,239.37 426.65,235.18" fill="rgb(60,60,60)"/><polygon points="378.06,172.21 392.97,171.64 393.66,174.49 380.01,175.02" fill="rgb(185,185,225)"/><polygon points="381.37,180.99 393.97,180.47 392.58,202.86 380.26,203.46" fill="rgb(125,160,180)"/><polygon points="393.66,174.49 407.77,175.25 407.00,181.17 393.97,180.47" fill="rgb(205,205,205)"/><polygon points="361.44,172.60 376.13,170.48 378.06,172.21 364.48,174.18" fill="rgb(230,170,40)"/><polygon points="407.77,175.25 421.53,177.28 419.71,183.07 407.00,181.17" fill="rgb(85,40,0)"/><polygon points="359.74,208.36 369.08,205.32 367.78,232.15 358.61,235.40" fill="rgb(175,115,40)"/><polygon points="419.71,183.07 431.36,186.04 429.09,208.49 417.73,205.45" fill="rgb(10,75,20)"/><polygon points="423.41,174.69 437.22,178.15 434.16,180.47 421.53,177.28" fill="rgb(15,90,30)"/><polygon points="443.00,175.60 456.81,180.86 452.85,181.79 440.08,176.89" fill="rgb(75,105,150)"/><polygon points="380.01,175.02 393.66,174.49 393.97,180.47 381.37,180.99" fill="rgb(125,160,180)"/><polygon points="340.76,174.41 355.17,170.35 358.31,170.97 344.91,174.77" fill="rgb(230,210,200)"/><polygon points="476.55,337.33 472.94,348.51 476.10,323.02 479.69,312.26" fill="rgb(205,175,135)"/><polygon points="369.94,182.72 381.37,180.99 380.26,203.46 369.08,205.32" fill="rgb(160,95,15)"/><polygon points="364.48,174.18 378.06,172.21 380.01,175.02 367.61,176.85" fill="rgb(220,150,40)"/><polygon points="421.53,177.28 434.16,180.47 431.36,186.04 419.71,183.07" fill="rgb(10,75,20)"/><polygon points="440.08,176.89 452.85,181.79 449.00,182.69 437.22,178.15" fill="rgb(75,105,150)"/><polygon points="344.91,174.77 358.31,170.97 361.44,172.60 349.05,176.14" fill="rgb(220,190,175)"/><polygon points="465.04,183.44 477.50,190.76 472.08,187.66 460.63,180.93" fill="rgb(180,180,180)"/><polygon points="438.72,212.52 445.96,217.30 443.14,244.37 436.07,239.37" fill="rgb(100,100,100)"/><polygon points="367.61,176.85 380.01,175.02 381.37,180.99 369.94,182.72" fill="rgb(165,100,20)"/><polygon points="465.75,367.56 456.74,377.42 463.38,358.72 472.94,348.51" fill="rgb(245,200,150)"/><polygon points="431.36,186.04 441.23,189.95 438.72,212.52 429.09,208.49" fill="rgb(75,75,75)"/><polygon points="437.22,178.15 449.00,182.69 444.89,184.64 434.16,180.47" fill="rgb(90,100,120)"/><polygon points="349.05,176.14 361.44,172.60 364.48,174.18 353.07,177.48" fill="rgb(210,175,140)"/><polygon points="312.01,341.18 307.80,329.55 308.25,304.12 312.53,315.35" fill="rgb(110,55,20)"/><polygon points="460.63,180.93 472.08,187.66 467.42,187.13 456.81,180.86" fill="rgb(160,160,160)"/><polygon points="360.38,185.59 369.94,182.72 369.08,205.32 359.74,208.36" fill="rgb(185,125,55)"/><polygon points="434.16,180.47 444.89,184.64 441.23,189.95 431.36,186.04" fill="rgb(70,70,70)"/><polygon points="323.74,182.46 335.61,176.41 340.76,174.41 329.89,179.97" fill="rgb(175,220,235)"/><polygon points="353.07,177.48 364.48,174.18 367.61,176.85 357.22,179.89" fill="rgb(200,150,100)"/><polygon points="452.96,380.37 439.51,388.05 442.60,385.48 456.74,377.42" fill="rgb(125,125,70)"/><polygon points="325.85,371.66 316.30,360.91 312.01,341.18 322.22,352.37" fill="rgb(220,220,220)"/><polygon points="456.81,180.86 467.42,187.13 462.62,187.61 452.85,181.79" fill="rgb(160,160,160)"/><polygon points="357.22,179.89 367.61,176.85 369.94,182.72 360.38,185.59" fill="rgb(180,130,80)"/><polygon points="329.89,179.97 340.76,174.41 344.91,174.77 334.85,179.95" fill="rgb(180,225,240)"/><polygon points="452.85,181.79 462.62,187.61 457.97,188.08 449.00,182.69" fill="rgb(150,150,150)"/><polygon points="441.23,189.95 448.68,194.57 445.96,217.30 438.72,212.52" fill="rgb(145,145,145)"/><polygon points="342.89,383.86 328.98,374.94 325.85,371.66 340.50,381.04" fill="rgb(225,200,0)"/><polygon points="479.69,312.26 476.10,323.02 479.38,296.69 482.95,286.38" fill="rgb(205,175,135)"/><polygon points="334.85,179.95 344.91,174.77 349.05,176.14 339.80,180.97" fill="rgb(170,220,235)"/><polygon points="449.00,182.69 457.97,188.08 453.02,189.59 444.89,184.64" fill="rgb(150,150,150)"/><polygon points="353.36,189.45 360.38,185.59 359.74,208.36 352.87,212.42" fill="rgb(110,165,225)"/><polygon points="444.89,184.64 453.02,189.59 448.68,194.57 441.23,189.95" fill="rgb(135,135,135)"/><polygon points="339.80,180.97 349.05,176.14 353.07,177.48 344.60,181.95" fill="rgb(160,215,235)"/><polygon points="472.94,348.51 463.38,358.72 466.46,332.83 476.10,323.02" fill="rgb(205,205,160)"/><polygon points="477.50,190.76 485.40,198.91 479.26,195.12 472.08,187.66" fill="rgb(255,50,0)"/><polygon points="456.74,377.42 442.60,385.48 448.24,367.08 463.38,358.72" fill="rgb(125,125,70)"/><polygon points="344.60,181.95 353.07,177.48 357.22,179.89 349.55,184.01" fill="rgb(150,210,230)"/><polygon points="349.55,184.01 357.22,179.89 360.38,185.59 353.36,189.45" fill="rgb(140,200,230)"/><polygon points="439.51,388.05 422.10,393.31 424.23,391.01 442.60,385.48" fill="rgb(175,180,225)"/><polygon points="312.53,315.35 308.25,304.12 308.71,277.87 313.07,288.65" fill="rgb(110,55,20)"/><polygon points="472.08,187.66 479.26,195.12 474.02,194.07 467.42,187.13" fill="rgb(255,40,0)"/><polygon points="448.68,194.57 453.14,199.64 450.28,222.56 445.96,217.30" fill="rgb(225,200,0)"/><polygon points="467.42,187.13 474.02,194.07 468.65,194.04 462.62,187.61" fill="rgb(250,70,0)"/><polygon points="360.68,390.67 342.89,383.86 340.50,381.04 359.29,388.21" fill="rgb(195,180,160)"/><polygon points="340.50,381.04 325.85,371.66 322.22,352.37 337.99,362.17" fill="rgb(225,200,0)"/><polygon points="322.22,352.37 312.01,341.18 312.53,315.35 322.93,326.18" fill="rgb(200,200,225)"/><polygon points="316.61,189.87 323.74,182.46 329.89,179.97 323.44,186.75" fill="rgb(150,200,220)"/><polygon points="462.62,187.61 468.65,194.04 463.44,194.02 457.97,188.08" fill="rgb(245,110,0)"/><polygon points="457.97,188.08 463.44,194.02 457.94,195.02 453.02,189.59" fill="rgb(235,150,0)"/><polygon points="482.95,286.38 479.38,296.69 482.76,269.45 486.30,259.64" fill="rgb(75,75,75)"/><polygon points="349.41,194.10 353.36,189.45 352.87,212.42 349.01,217.27" fill="rgb(70,70,15)"/><polygon points="323.44,186.75 329.89,179.97 334.85,179.95 328.95,186.27" fill="rgb(110,110,60)"/><polygon points="453.02,189.59 457.94,195.02 453.14,199.64 448.68,194.57" fill="rgb(225,150,10)"/><polygon points="422.10,393.31 402.03,395.61 403.02,393.43 424.23,391.01" fill="rgb(105,160,170)"/><polygon points="328.95,186.27 334.85,179.95 339.80,180.97 334.44,186.83" fill="rgb(105,105,55)"/><polygon points="380.96,394.71 360.68,390.67 359.29,388.21 380.73,392.47" fill="rgb(190,215,232)"/><polygon points="334.44,186.83 339.80,180.97 344.60,181.95 339.74,187.37" fill="rgb(95,95,45)"/><polygon points="442.60,385.48 424.23,391.01 428.46,372.79 448.24,367.08" fill="rgb(175,180,225)"/><polygon points="402.03,395.61 380.96,394.71 380.73,392.47 403.02,393.43" fill="rgb(125,120,75)"/><polygon points="339.74,187.37 344.60,181.95 349.55,184.01 345.20,188.97" fill="rgb(90,90,40)"/><polygon points="345.20,188.97 349.55,184.01 353.36,189.45 349.41,194.10" fill="rgb(85,85,25)"/><polygon points="476.10,323.02 466.46,332.83 469.64,306.06 479.38,296.69" fill="rgb(190,190,140)"/><polygon points="313.07,288.65 308.71,277.87 309.18,250.73 313.64,261.04" fill="rgb(150,100,55)"/><polygon points="463.38,358.72 448.24,367.08 451.12,340.84 466.46,332.83" fill="rgb(120,120,60)"/><polygon points="453.14,199.64 454.21,204.84 451.28,227.96 450.28,222.56" fill="rgb(150,90,30)"/><polygon points="359.29,388.21 340.50,381.04 337.99,362.17 358.27,369.70" fill="rgb(195,180,160)"/><polygon points="485.40,198.91 487.93,207.42 481.45,202.89 479.26,195.12" fill="rgb(195,160,120)"/><polygon points="309.67,222.66 311.45,213.34 316.61,189.87 315.03,198.25" fill="rgb(150,100,55)"/><polygon points="479.26,195.12 481.45,202.89 475.95,201.27 474.02,194.07" fill="rgb(205,165,115)"/><polygon points="348.94,199.25 349.41,194.10 349.01,217.27 348.55,222.63" fill="rgb(60,70,20)"/><polygon points="322.93,326.18 312.53,315.35 313.07,288.65 323.66,299.09" fill="rgb(170,180,225)"/><polygon points="474.02,194.07 475.95,201.27 470.32,200.69 468.65,194.04" fill="rgb(200,150,95)"/><polygon points="457.94,195.02 459.17,200.61 454.21,204.84 453.14,199.64" fill="rgb(190,120,40)"/><polygon points="486.30,259.64 482.76,269.45 486.26,241.28 489.78,231.99" fill="rgb(75,75,75)"/><polygon points="468.65,194.04 470.32,200.69 464.89,200.14 463.44,194.02" fill="rgb(205,155,95)"/><polygon points="337.99,362.17 322.22,352.37 322.93,326.18 338.98,335.70" fill="rgb(220,145,0)"/><polygon points="424.23,391.01 403.02,393.43 405.56,375.27 428.46,372.79" fill="rgb(105,160,170)"/><polygon points="463.44,194.02 464.89,200.14 459.17,200.61 457.94,195.02" fill="rgb(195,145,80)"/><polygon points="380.73,392.47 359.29,388.21 358.27,369.70 381.45,374.21" fill="rgb(190,215,232)"/><polygon points="315.03,198.25 316.61,189.87 323.44,186.75 322.14,194.39" fill="rgb(150,205,225)"/><polygon points="403.02,393.43 380.73,392.47 381.45,374.21 405.56,375.27" fill="rgb(125,120,75)"/><polygon points="344.62,194.50 345.20,188.97 349.41,194.10 348.94,199.25" fill="rgb(40,95,95)"/><polygon points="322.14,194.39 323.44,186.75 328.95,186.27 327.86,193.36" fill="rgb(120,160,180)"/><polygon points="327.86,193.36 328.95,186.27 334.44,186.83 333.53,193.39" fill="rgb(100,150,160)"/><polygon points="339.01,193.42 339.74,187.37 345.20,188.97 344.62,194.50" fill="rgb(70,120,125)"/><polygon points="333.53,193.39 334.44,186.83 339.74,187.37 339.01,193.42" fill="rgb(90,140,145)"/><polygon points="479.38,296.69 469.64,306.06 472.93,278.36 482.76,269.45" fill="rgb(150,150,150)"/><polygon points="313.64,261.04 309.18,250.73 309.67,222.66 314.22,232.46" fill="rgb(150,100,55)"/><polygon points="448.24,367.08 428.46,372.79 431.03,346.29 451.12,340.84" fill="rgb(150,185,205)"/><polygon points="466.46,332.83 451.12,340.84 454.09,313.69 469.64,306.06" fill="rgb(105,105,45)"/><polygon points="489.78,231.99 486.26,241.28 484.50,215.73 487.93,207.42" fill="rgb(75,75,75)"/><polygon points="358.27,369.70 337.99,362.17 338.98,335.70 359.63,343.04" fill="rgb(210,165,110)"/><polygon points="459.17,200.61 456.46,205.97 451.64,209.83 454.21,204.84" fill="rgb(100,60,30)"/><polygon points="323.66,299.09 313.07,288.65 313.64,261.04 324.42,271.04" fill="rgb(20,20,20)"/><polygon points="464.89,200.14 462.01,206.03 456.46,205.97 459.17,200.61" fill="rgb(90,80,70)"/><polygon points="470.32,200.69 467.29,207.11 462.01,206.03 464.89,200.14" fill="rgb(115,100,85)"/><polygon points="338.98,335.70 322.93,326.18 323.66,299.09 340.01,308.29" fill="rgb(225,150,0)"/><polygon points="475.95,201.27 472.77,208.24 467.29,207.11 470.32,200.69" fill="rgb(135,120,100)"/><polygon points="487.93,207.42 484.50,215.73 478.16,210.43 481.45,202.89" fill="rgb(190,165,135)"/><polygon points="481.45,202.89 478.16,210.43 472.77,208.24 475.95,201.27" fill="rgb(160,140,115)"/><polygon points="428.46,372.79 405.56,375.27 407.75,348.59 431.03,346.29" fill="rgb(85,140,145)"/><polygon points="348.02,200.22 344.62,194.50 348.94,199.25 352.12,204.57" fill="rgb(90,130,140)"/><polygon points="314.22,232.46 309.67,222.66 315.03,198.25 319.52,207.05" fill="rgb(155,105,60)"/><polygon points="381.45,374.21 358.27,369.70 359.63,343.04 383.23,347.48" fill="rgb(170,228,240)"/><polygon points="342.66,199.69 339.01,193.42 344.62,194.50 348.02,200.22" fill="rgb(130,150,165)"/><polygon points="482.76,269.45 472.93,278.36 476.34,249.68 486.26,241.28" fill="rgb(140,140,140)"/><polygon points="337.41,200.22 333.53,193.39 339.01,193.42 342.66,199.69" fill="rgb(150,180,200)"/><polygon points="405.56,375.27 381.45,374.21 383.23,347.48 407.75,348.59" fill="rgb(110,110,50)"/><polygon points="331.94,200.77 327.86,193.36 333.53,193.39 337.41,200.22" fill="rgb(170,175,220)"/><polygon points="326.42,202.41 322.14,194.39 327.86,193.36 331.94,200.77" fill="rgb(195,195,230)"/><polygon points="319.52,207.05 315.03,198.25 322.14,194.39 326.42,202.41" fill="rgb(222,222,222)"/><polygon points="451.12,340.84 431.03,346.29 433.70,318.85 454.09,313.69" fill="rgb(135,155,165)"/><polygon points="469.64,306.06 454.09,313.69 457.17,285.58 472.93,278.36" fill="rgb(225,155,0)"/><polygon points="324.42,271.04 313.64,261.04 314.22,232.46 325.21,242.00" fill="rgb(12,12,12)"/><polygon points="359.63,343.04 338.98,335.70 340.01,308.29 361.03,315.43" fill="rgb(185,140,95)"/><polygon points="462.01,206.03 454.77,211.25 449.81,210.71 456.46,205.97" fill="rgb(80,80,80)"/><polygon points="467.29,207.11 459.50,212.82 454.77,211.25 462.01,206.03" fill="rgb(95,95,95)"/><polygon points="340.01,308.29 323.66,299.09 324.42,271.04 341.07,279.91" fill="rgb(135,90,50)"/><polygon points="486.26,241.28 476.34,249.68 474.96,223.21 484.50,215.73" fill="rgb(135,135,135)"/><polygon points="472.77,208.24 464.42,214.45 459.50,212.82 467.29,207.11" fill="rgb(105,105,105)"/><polygon points="350.66,205.75 342.66,199.69 348.02,200.22 355.36,205.72" fill="rgb(190,190,140)"/><polygon points="431.03,346.29 407.75,348.59 410.02,320.97 433.70,318.85" fill="rgb(70,115,120)"/><polygon points="478.16,210.43 469.26,217.18 464.42,214.45 472.77,208.24" fill="rgb(115,115,115)"/><polygon points="484.50,215.73 474.96,223.21 469.26,217.18 478.16,210.43" fill="rgb(125,125,125)"/><polygon points="346.04,206.84 337.41,200.22 342.66,199.69 350.66,205.75" fill="rgb(200,200,150)"/><polygon points="383.23,347.48 359.63,343.04 361.03,315.43 385.06,319.80" fill="rgb(165,220,232)"/><polygon points="407.75,348.59 383.23,347.48 385.06,319.80 410.02,320.97" fill="rgb(95,95,35)"/><polygon points="341.22,207.97 331.94,200.77 337.41,200.22 346.04,206.84" fill="rgb(245,210,165)"/><polygon points="325.21,242.00 314.22,232.46 319.52,207.05 330.17,215.65" fill="rgb(8,8,8)"/><polygon points="472.93,278.36 457.17,285.58 460.36,256.45 476.34,249.68" fill="rgb(220,195,0)"/><polygon points="454.09,313.69 433.70,318.85 436.45,290.42 457.17,285.58" fill="rgb(175,115,30)"/><polygon points="336.33,210.20 326.42,202.41 331.94,200.77 341.22,207.97" fill="rgb(250,215,170)"/><polygon points="454.77,211.25 443.52,215.37 439.55,214.44 449.81,210.71" fill="rgb(0,200,230)"/><polygon points="330.17,215.65 319.52,207.05 326.42,202.41 336.33,210.20" fill="rgb(250,215,180)"/><polygon points="361.03,315.43 340.01,308.29 341.07,279.91 362.49,286.83" fill="rgb(45,75,130)"/><polygon points="459.50,212.82 447.30,217.34 443.52,215.37 454.77,211.25" fill="rgb(40,220,220)"/><polygon points="362.59,211.12 350.66,205.75 355.36,205.72 366.22,210.58" fill="rgb(190,160,130)"/><polygon points="341.07,279.91 324.42,271.04 325.21,242.00 342.18,250.50" fill="rgb(130,85,45)"/><polygon points="464.42,214.45 451.24,219.39 447.30,217.34 459.50,212.82" fill="rgb(0,240,0)"/><polygon points="359.00,212.71 346.04,206.84 350.66,205.75 362.59,211.12" fill="rgb(200,175,150)"/><polygon points="433.70,318.85 410.02,320.97 412.37,292.34 436.45,290.42" fill="rgb(120,75,35)"/><polygon points="476.34,249.68 460.36,256.45 459.64,229.19 474.96,223.21" fill="rgb(225,200,0)"/><polygon points="469.26,217.18 455.11,222.56 451.24,219.39 464.42,214.45" fill="rgb(0,230,20)"/><polygon points="443.52,215.37 428.99,218.02 426.36,216.82 439.55,214.44" fill="rgb(80,130,200)"/><polygon points="385.06,319.80 361.03,315.43 362.49,286.83 386.96,291.11" fill="rgb(0,100,255)"/><polygon points="355.24,214.37 341.22,207.97 346.04,206.84 359.00,212.71" fill="rgb(215,190,175)"/><polygon points="474.96,223.21 459.64,229.19 455.11,222.56 469.26,217.18" fill="rgb(150,220,0)"/><polygon points="377.64,215.33 362.59,211.12 366.22,210.58 379.87,214.39" fill="rgb(190,140,90)"/><polygon points="410.02,320.97 385.06,319.80 386.96,291.11 412.37,292.34" fill="rgb(85,85,85)"/><polygon points="457.17,285.58 436.45,290.42 439.31,260.95 460.36,256.45" fill="rgb(165,100,15)"/><polygon points="447.30,217.34 431.47,220.25 428.99,218.02 443.52,215.37" fill="rgb(70,110,180)"/><polygon points="351.39,217.15 336.33,210.20 341.22,207.97 355.24,214.37" fill="rgb(225,200,185)"/><polygon points="342.18,250.50 325.21,242.00 330.17,215.65 346.50,223.32" fill="rgb(85,80,70)"/><polygon points="428.99,218.02 412.25,218.93 411.20,217.65 426.36,216.82" fill="rgb(180,160,130)"/><polygon points="375.40,217.32 359.00,212.71 362.59,211.12 377.64,215.33" fill="rgb(205,160,120)"/><polygon points="346.50,223.32 330.17,215.65 336.33,210.20 351.39,217.15" fill="rgb(250,215,180)"/><polygon points="362.49,286.83 341.07,279.91 342.18,250.50 364.00,257.17" fill="rgb(20,45,95)"/><polygon points="394.65,218.01 377.64,215.33 379.87,214.39 395.27,216.81" fill="rgb(180,120,160)"/><polygon points="451.24,219.39 434.07,222.58 431.47,220.25 447.30,217.34" fill="rgb(50,90,160)"/><polygon points="412.25,218.93 394.65,218.01 395.27,216.81 411.20,217.65" fill="rgb(40,40,40)"/><polygon points="431.47,220.25 413.20,221.26 412.25,218.93 428.99,218.02" fill="rgb(170,150,120)"/><polygon points="373.05,219.40 355.24,214.37 359.00,212.71 375.40,217.32" fill="rgb(225,170,160)"/><polygon points="455.11,222.56 436.59,226.06 434.07,222.58 451.24,219.39" fill="rgb(60,100,170)"/><polygon points="393.98,220.26 375.40,217.32 377.64,215.33 394.65,218.01" fill="rgb(190,30,190)"/><polygon points="436.45,290.42 412.37,292.34 414.81,262.66 439.31,260.95" fill="rgb(95,50,15)"/><polygon points="460.36,256.45 439.31,260.95 439.48,233.10 459.64,229.19" fill="rgb(160,95,10)"/><polygon points="413.20,221.26 393.98,220.26 394.65,218.01 412.25,218.93" fill="rgb(30,30,30)"/><polygon points="386.96,291.11 362.49,286.83 364.00,257.17 388.94,261.36" fill="rgb(0,60,245)"/><polygon points="459.64,229.19 439.48,233.10 436.59,226.06 455.11,222.56" fill="rgb(110,165,225)"/><polygon points="370.61,222.63 351.39,217.15 355.24,214.37 373.05,219.40" fill="rgb(240,150,170)"/><polygon points="434.07,222.58 414.20,223.70 413.20,221.26 431.47,220.25" fill="rgb(190,160,120)"/><polygon points="412.37,292.34 386.96,291.11 388.94,261.36 414.81,262.66" fill="rgb(75,75,75)"/><polygon points="393.27,222.62 373.05,219.40 375.40,217.32 393.98,220.26" fill="rgb(200,60,200)"/><polygon points="364.00,257.17 342.18,250.50 346.50,223.32 367.43,229.38" fill="rgb(0,25,70)"/><polygon points="414.20,223.70 393.27,222.62 393.98,220.26 413.20,221.26" fill="rgb(25,25,25)"/><polygon points="367.43,229.38 346.50,223.32 351.39,217.15 370.61,222.63" fill="rgb(235,130,160)"/><polygon points="436.59,226.06 415.12,227.30 414.20,223.70 434.07,222.58" fill="rgb(200,180,165)"/><polygon points="392.47,226.12 370.61,222.63 373.05,219.40 393.27,222.62" fill="rgb(140,140,240)"/><polygon points="439.31,260.95 414.81,262.66 416.04,234.51 439.48,233.10" fill="rgb(85,40,0)"/><polygon points="415.12,227.30 392.47,226.12 393.27,222.62 414.20,223.70" fill="rgb(40,40,40)"/><polygon points="439.48,233.10 416.04,234.51 415.12,227.30 436.59,226.06" fill="rgb(250,215,175)"/><polygon points="388.94,261.36 364.00,257.17 367.43,229.38 391.30,233.23" fill="rgb(0,0,255)"/><polygon points="391.30,233.23 367.43,229.38 370.61,222.63 392.47,226.12" fill="rgb(140,140,235)"/><polygon points="414.81,262.66 388.94,261.36 391.30,233.23 416.04,234.51" fill="rgb(65,65,65)"/><polygon points="416.04,234.51 391.30,233.23 392.47,226.12 415.12,227.30" fill="rgb(55,55,55)"/></g>
<g fill="#ff0000" shape-rendering="crispEdges"><rect x="271" y="191" width="1" height="1"/><rect x="272" y="190" width="10" height="1"/><rect x="282" y="189" width="11" height="1"/><rect x="293" y="188" width="11" height="1"/><rect x="304" y="187" width="10" height="1"/><rect x="314" y="186" width="11" height="1"/><rect x="325" y="185" width="10" height="1"/><rect x="335" y="184" width="11" height="1"/><rect x="346" y="183" width="11" height="1"/><rect x="357" y="182" width="10" height="1"/><rect x="367" y="181" width="11" height="1"/><rect x="378" y="180" width="11" height="1"/><rect x="389" y="179" width="10" height="1"/><rect x="399" y="178" width="11" height="1"/><rect x="410" y="177" width="11" height="1"/><rect x="421" y="176" width="10" height="1"/><rect x="431" y="175" width="11" height="1"/><rect x="442" y="174" width="11" height="1"/><rect x="453" y="173" width="10" height="1"/><rect x="463" y="172" width="11" height="1"/><rect x="474" y="171" width="11" height="1"/><rect x="485" y="170" width="10" height="1"/><rect x="495" y="169" width="11" height="1"/><rect x="506" y="168" width="10" height="1"/><rect x="516" y="167" width="11" height="1"/><rect x="527" y="166" width="11" height="1"/><rect x="538" y="165" width="10" height="1"/><rect x="548" y="164" width="11" height="1"/><rect x="559" y="163" width="11" height="1"/><rect x="570" y="162" width="10" height="1"/><rect x="580" y="161" width="11" height="1"/><rect x="591" y="160" width="11" height="1"/><rect x="602" y="159" width="10" height="1"/><rect x="612" y="158" width="11" height="1"/><rect x="623" y="157" width="11" height="1"/><rect x="634" y="156" width="10" height="1"/><rect x="644" y="155" width="11" height="1"/><rect x="655" y="154" width="11" height="1"/><rect x="666" y="153" width="10" height="1"/><rect x="676" y="152" width="11" height="1"/><rect x="687" y="151" width="10" height="1"/><rect x="697" y="150" width="1" height="1"/></g>
</svg>
<g shape-rendering="crispEdges">
<rect x="0" y="0" width="792" height="1" fill="#808080"/>
<rect x="0" y="1" width="792" height="1" fill="#ffffff"/>
<rect x="0" y="2" width="792" height="25" fill="#c0c0c0"/>
<rect x="0" y="27" width="792" height="1" fill="#d8d8d8"/>
<rect x="0" y="4" width="23" height="22" fill="#000000"/>
<rect x="0" y="4" width="22" height="21" fill="#ffffff"/>
<rect x="1" y="5" width="21" height="20" fill="#808080"/>
<rect x="1" y="5" width="20" height="19" fill="#dfdfdf"/>
<rect x="2" y="6" width="19" height="18" fill="#c0c0c0"/>
<rect x="23" y="4" width="23" height="22" fill="#000000"/>
<rect x="23" y="4" width="22" height="21" fill="#ffffff"/>
<rect x="24" y="5" width="21" height="20" fill="#808080"/>
<rect x="24" y="5" width="20" height="19" fill="#dfdfdf"/>
<rect x="25" y="6" width="19" height="18" fill="#c0c0c0"/>
<rect x="46" y="4" width="23" height="22" fill="#000000"/>
<rect x="46" y="4" width="22" height="21" fill="#ffffff"/>
<rect x="47" y="5" width="21" height="20" fill="#808080"/>
<rect x="47" y="5" width="20" height="19" fill="#dfdfdf"/>
<rect x="48" y="6" width="19" height="18" fill="#c0c0c0"/>
<rect x="69" y="4" width="23" height="22" fill="#000000"/>
<rect x="69" y="4" width="22" height="21" fill="#ffffff"/>
<rect x="70" y="5" width="21" height="20" fill="#808080"/>
<rect x="70" y="5" width="20" height="19" fill="#dfdfdf"/>
<rect x="71" y="6" width="19" height="18" fill="#c0c0c0"/>
<rect x="251" y="6" width="78" height="18" fill="#ffffff"/>
<rect x="251" y="6" width="77" height="17" fill="#808080"/>
<rect x="252" y="7" width="76" height="16" fill="#dfdfdf"/>
<rect x="252" y="7" width="75" height="15" fill="#000000"/>
<rect x="253" y="8" width="74" height="14" fill="#ffffff"/>
<text x="260" y="20.2" font-family="Liberation Mono" font-size="12" letter-spacing="-0.2" font-weight="bold" fill="#000" filter="url(#alias)">B1</text>
<rect x="351" y="6" width="148" height="18" fill="#ffffff"/>
<rect x="351" y="6" width="147" height="17" fill="#808080"/>
<rect x="352" y="7" width="146" height="16" fill="#dfdfdf"/>
<rect x="352" y="7" width="145" height="15" fill="#000000"/>
<rect x="353" y="8" width="144" height="14" fill="#ffffff"/>
<text x="360" y="20.2" font-family="Liberation Mono" font-size="12" letter-spacing="-0.2" font-weight="bold" fill="#000" filter="url(#alias)">BLOCKAGE</text>
<rect x="0" y="531" width="792" height="23" fill="#c0c0c0"/>
<rect x="0" y="531" width="792" height="1" fill="#d8d8d8"/>
<rect x="0" y="533" width="792" height="21" fill="#ffffff"/>
<rect x="0" y="533" width="791" height="20" fill="#808080"/>
<rect x="1" y="534" width="790" height="19" fill="#c0c0c0"/>
<rect x="778" y="539" width="14" height="15" fill="#c0c0c0"/>
<rect x="779" y="552" width="1" height="1" fill="#ffffff"/>
<rect x="780" y="552" width="1" height="1" fill="#808080"/>
<rect x="781" y="552" width="1" height="1" fill="#808080"/>
<rect x="780" y="551" width="1" height="1" fill="#ffffff"/>
<rect x="781" y="551" width="1" height="1" fill="#808080"/>
<rect x="782" y="551" width="1" height="1" fill="#808080"/>
<rect x="781" y="550" width="1" height="1" fill="#ffffff"/>
<rect x="782" y="550" width="1" height="1" fill="#808080"/>
<rect x="783" y="550" width="1" height="1" fill="#808080"/>
<rect x="782" y="549" width="1" height="1" fill="#ffffff"/>
<rect x="783" y="549" width="1" height="1" fill="#808080"/>
<rect x="784" y="549" width="1" height="1" fill="#808080"/>
<rect x="783" y="548" width="1" height="1" fill="#ffffff"/>
<rect x="784" y="548" width="1" height="1" fill="#808080"/>
<rect x="785" y="548" width="1" height="1" fill="#808080"/>
<rect x="784" y="547" width="1" height="1" fill="#ffffff"/>
<rect x="785" y="547" width="1" height="1" fill="#808080"/>
<rect x="786" y="547" width="1" height="1" fill="#808080"/>
<rect x="785" y="546" width="1" height="1" fill="#ffffff"/>
<rect x="786" y="546" width="1" height="1" fill="#808080"/>
<rect x="787" y="546" width="1" height="1" fill="#808080"/>
<rect x="786" y="545" width="1" height="1" fill="#ffffff"/>
<rect x="787" y="545" width="1" height="1" fill="#808080"/>
<rect x="788" y="545" width="1" height="1" fill="#808080"/>
<rect x="787" y="544" width="1" height="1" fill="#ffffff"/>
<rect x="788" y="544" width="1" height="1" fill="#808080"/>
<rect x="789" y="544" width="1" height="1" fill="#808080"/>
<rect x="788" y="543" width="1" height="1" fill="#ffffff"/>
<rect x="789" y="543" width="1" height="1" fill="#808080"/>
<rect x="790" y="543" width="1" height="1" fill="#808080"/>
<rect x="789" y="542" width="1" height="1" fill="#ffffff"/>
<rect x="790" y="542" width="1" height="1" fill="#808080"/>
<rect x="790" y="541" width="1" height="1" fill="#ffffff"/>
<rect x="783" y="552" width="1" height="1" fill="#ffffff"/>
<rect x="784" y="552" width="1" height="1" fill="#808080"/>
<rect x="785" y="552" width="1" height="1" fill="#808080"/>
<rect x="784" y="551" width="1" height="1" fill="#ffffff"/>
<rect x="785" y="551" width="1" height="1" fill="#808080"/>
<rect x="786" y="551" width="1" height="1" fill="#808080"/>
<rect x="785" y="550" width="1" height="1" fill="#ffffff"/>
<rect x="786" y="550" width="1" height="1" fill="#808080"/>
<rect x="787" y="550" width="1" height="1" fill="#808080"/>
<rect x="786" y="549" width="1" height="1" fill="#ffffff"/>
<rect x="787" y="549" width="1" height="1" fill="#808080"/>
<rect x="788" y="549" width="1" height="1" fill="#808080"/>
<rect x="787" y="548" width="1" height="1" fill="#ffffff"/>
<rect x="788" y="548" width="1" height="1" fill="#808080"/>
<rect x="789" y="548" width="1" height="1" fill="#808080"/>
<rect x="788" y="547" width="1" height="1" fill="#ffffff"/>
<rect x="789" y="547" width="1" height="1" fill="#808080"/>
<rect x="790" y="547" width="1" height="1" fill="#808080"/>
<rect x="789" y="546" width="1" height="1" fill="#ffffff"/>
<rect x="790" y="546" width="1" height="1" fill="#808080"/>
<rect x="790" y="545" width="1" height="1" fill="#ffffff"/>
<rect x="787" y="552" width="1" height="1" fill="#ffffff"/>
<rect x="788" y="552" width="1" height="1" fill="#808080"/>
<rect x="789" y="552" width="1" height="1" fill="#808080"/>
<rect x="788" y="551" width="1" height="1" fill="#ffffff"/>
<rect x="789" y="551" width="1" height="1" fill="#808080"/>
<rect x="790" y="551" width="1" height="1" fill="#808080"/>
<rect x="789" y="550" width="1" height="1" fill="#ffffff"/>
<rect x="790" y="550" width="1" height="1" fill="#808080"/>
<rect x="790" y="549" width="1" height="1" fill="#ffffff"/>
<text x="3.5" y="548" font-family="Liberation Sans" font-size="14" fill="#000" filter="url(#alias)">Ready</text>
</g>
<g shape-rendering="crispEdges"><rect x="7" y="8" width="1" height="1" fill="#ffffff"/><rect x="7" y="9" width="1" height="1" fill="#ffffff"/><rect x="7" y="10" width="1" height="1" fill="#ffffff"/><rect x="7" y="11" width="1" height="1" fill="#ffffff"/><rect x="7" y="12" width="1" height="1" fill="#ffffff"/><rect x="7" y="13" width="1" height="1" fill="#ffffff"/><rect x="7" y="14" width="1" height="1" fill="#ffffff"/><rect x="7" y="15" width="1" height="1" fill="#ffffff"/><rect x="7" y="16" width="1" height="1" fill="#ffffff"/><rect x="7" y="17" width="1" height="1" fill="#ffffff"/><rect x="7" y="18" width="1" height="1" fill="#ffffff"/><rect x="8" y="8" width="1" height="1" fill="#ffffff"/><rect x="8" y="9" width="1" height="1" fill="#ffffff"/><rect x="8" y="10" width="1" height="1" fill="#ffffff"/><rect x="8" y="11" width="1" height="1" fill="#ffffff"/><rect x="8" y="12" width="1" height="1" fill="#ffffff"/><rect x="8" y="13" width="1" height="1" fill="#ffffff"/><rect x="8" y="14" width="1" height="1" fill="#ffffff"/><rect x="8" y="15" width="1" height="1" fill="#ffffff"/><rect x="8" y="16" width="1" height="1" fill="#ffffff"/><rect x="8" y="17" width="1" height="1" fill="#ffffff"/><rect x="8" y="18" width="1" height="1" fill="#ffffff"/><rect x="9" y="8" width="1" height="1" fill="#ffffff"/><rect x="9" y="9" width="1" height="1" fill="#ffffff"/><rect x="9" y="10" width="1" height="1" fill="#ffffff"/><rect x="9" y="11" width="1" height="1" fill="#ffffff"/><rect x="9" y="12" width="1" height="1" fill="#ffffff"/><rect x="9" y="13" width="1" height="1" fill="#ffffff"/><rect x="9" y="14" width="1" height="1" fill="#ffffff"/><rect x="9" y="15" width="1" height="1" fill="#ffffff"/><rect x="9" y="16" width="1" height="1" fill="#ffffff"/><rect x="9" y="17" width="1" height="1" fill="#ffffff"/><rect x="9" y="18" width="1" height="1" fill="#ffffff"/><rect x="10" y="8" width="1" height="1" fill="#ffffff"/><rect x="10" y="9" width="1" height="1" fill="#ffffff"/><rect x="10" y="10" width="1" height="1" fill="#ffffff"/><rect x="10" y="11" width="1" height="1" fill="#ffffff"/><rect x="10" y="12" width="1" height="1" fill="#ffffff"/><rect x="10" y="13" width="1" height="1" fill="#ffffff"/><rect x="10" y="14" width="1" height="1" fill="#ffffff"/><rect x="10" y="15" width="1" height="1" fill="#ffffff"/><rect x="10" y="16" width="1" height="1" fill="#ffffff"/><rect x="10" y="17" width="1" height="1" fill="#ffffff"/><rect x="10" y="18" width="1" height="1" fill="#ffffff"/><rect x="11" y="8" width="1" height="1" fill="#ffffff"/><rect x="11" y="9" width="1" height="1" fill="#ffffff"/><rect x="11" y="10" width="1" height="1" fill="#ffffff"/><rect x="11" y="11" width="1" height="1" fill="#ffffff"/><rect x="11" y="12" width="1" height="1" fill="#ffffff"/><rect x="11" y="13" width="1" height="1" fill="#ffffff"/><rect x="11" y="14" width="1" height="1" fill="#ffffff"/><rect x="11" y="15" width="1" height="1" fill="#ffffff"/><rect x="11" y="16" width="1" height="1" fill="#ffffff"/><rect x="11" y="17" width="1" height="1" fill="#ffffff"/><rect x="11" y="18" width="1" height="1" fill="#ffffff"/><rect x="12" y="8" width="1" height="1" fill="#ffffff"/><rect x="12" y="9" width="1" height="1" fill="#ffffff"/><rect x="12" y="10" width="1" height="1" fill="#ffffff"/><rect x="12" y="11" width="1" height="1" fill="#ffffff"/><rect x="12" y="12" width="1" height="1" fill="#ffffff"/><rect x="12" y="13" width="1" height="1" fill="#ffffff"/><rect x="12" y="14" width="1" height="1" fill="#ffffff"/><rect x="12" y="15" width="1" height="1" fill="#ffffff"/><rect x="12" y="16" width="1" height="1" fill="#ffffff"/><rect x="12" y="17" width="1" height="1" fill="#ffffff"/><rect x="12" y="18" width="1" height="1" fill="#ffffff"/><rect x="13" y="8" width="1" height="1" fill="#ffffff"/><rect x="13" y="9" width="1" height="1" fill="#ffffff"/><rect x="13" y="10" width="1" height="1" fill="#ffffff"/><rect x="13" y="11" width="1" height="1" fill="#ffffff"/><rect x="13" y="12" width="1" height="1" fill="#ffffff"/><rect x="13" y="13" width="1" height="1" fill="#ffffff"/><rect x="13" y="14" width="1" height="1" fill="#ffffff"/><rect x="13" y="15" width="1" height="1" fill="#ffffff"/><rect x="13" y="16" width="1" height="1" fill="#ffffff"/><rect x="13" y="17" width="1" height="1" fill="#ffffff"/><rect x="13" y="18" width="1" height="1" fill="#ffffff"/><rect x="14" y="8" width="1" height="1" fill="#ffffff"/><rect x="14" y="9" width="1" height="1" fill="#ffffff"/><rect x="14" y="10" width="1" height="1" fill="#ffffff"/><rect x="14" y="11" width="1" height="1" fill="#ffffff"/><rect x="14" y="12" width="1" height="1" fill="#ffffff"/><rect x="14" y="13" width="1" height="1" fill="#ffffff"/><rect x="14" y="14" width="1" height="1" fill="#ffffff"/><rect x="14" y="15" width="1" height="1" fill="#ffffff"/><rect x="14" y="16" width="1" height="1" fill="#ffffff"/><rect x="14" y="17" width="1" height="1" fill="#ffffff"/><rect x="14" y="18" width="1" height="1" fill="#ffffff"/><rect x="15" y="8" width="1" height="1" fill="#ffffff"/><rect x="15" y="9" width="1" height="1" fill="#ffffff"/><rect x="15" y="10" width="1" height="1" fill="#ffffff"/><rect x="15" y="11" width="1" height="1" fill="#ffffff"/><rect x="15" y="12" width="1" height="1" fill="#ffffff"/><rect x="15" y="13" width="1" height="1" fill="#ffffff"/><rect x="15" y="14" width="1" height="1" fill="#ffffff"/><rect x="15" y="15" width="1" height="1" fill="#ffffff"/><rect x="15" y="16" width="1" height="1" fill="#ffffff"/><rect x="15" y="17" width="1" height="1" fill="#ffffff"/><rect x="15" y="18" width="1" height="1" fill="#ffffff"/><rect x="14" y="8" width="1" height="1" fill="#c0c0c0"/><rect x="15" y="8" width="1" height="1" fill="#c0c0c0"/><rect x="15" y="9" width="1" height="1" fill="#c0c0c0"/><rect x="6" y="7" width="8" height="1" fill="#000000"/><rect x="6" y="7" width="1" height="13" fill="#000000"/><rect x="6" y="19" width="11" height="1" fill="#000000"/><rect x="16" y="10" width="1" height="10" fill="#000000"/><rect x="13" y="7" width="1" height="4" fill="#000000"/><rect x="13" y="10" width="4" height="1" fill="#000000"/><rect x="14" y="8" width="1" height="1" fill="#000000"/><rect x="15" y="9" width="1" height="1" fill="#000000"/><rect x="14" y="9" width="1" height="1" fill="#ffffff"/><rect x="36" y="7" width="1" height="1" fill="#000000"/><rect x="37" y="7" width="1" height="1" fill="#000000"/><rect x="38" y="7" width="1" height="1" fill="#000000"/><rect x="35" y="8" width="1" height="1" fill="#000000"/><rect x="39" y="8" width="1" height="1" fill="#000000"/><rect x="40" y="9" width="1" height="1" fill="#000000"/><rect x="41" y="8" width="1" height="1" fill="#000000"/><rect x="41" y="9" width="1" height="1" fill="#000000"/><rect x="41" y="10" width="1" height="1" fill="#000000"/><rect x="40" y="10" width="1" height="1" fill="#000000"/><rect x="39" y="10" width="1" height="1" fill="#000000"/><rect x="27" y="11" width="1" height="9" fill="#000000"/><rect x="28" y="10" width="3" height="1" fill="#000000"/><rect x="31" y="11" width="7" height="1" fill="#000000"/><rect x="37" y="11" width="1" height="3" fill="#000000"/><rect x="28" y="11" width="1" height="1" fill="#ffffff"/><rect x="29" y="11" width="1" height="1" fill="#ffff00"/><rect x="30" y="11" width="1" height="1" fill="#ffffff"/><rect x="28" y="12" width="1" height="1" fill="#ffff00"/><rect x="29" y="12" width="1" height="1" fill="#ffffff"/><rect x="30" y="12" width="1" height="1" fill="#ffff00"/><rect x="31" y="12" width="1" height="1" fill="#ffffff"/><rect x="32" y="12" width="1" height="1" fill="#ffff00"/><rect x="33" y="12" width="1" height="1" fill="#ffffff"/><rect x="34" y="12" width="1" height="1" fill="#ffff00"/><rect x="35" y="12" width="1" height="1" fill="#ffffff"/><rect x="36" y="12" width="1" height="1" fill="#ffff00"/><rect x="28" y="13" width="1" height="1" fill="#ffffff"/><rect x="29" y="13" width="1" height="1" fill="#ffff00"/><rect x="30" y="13" width="1" height="1" fill="#ffffff"/><rect x="31" y="13" width="1" height="1" fill="#ffff00"/><rect x="32" y="13" width="1" height="1" fill="#ffffff"/><rect x="33" y="13" width="1" height="1" fill="#ffff00"/><rect x="34" y="13" width="1" height="1" fill="#ffffff"/><rect x="35" y="13" width="1" height="1" fill="#ffff00"/><rect x="36" y="13" width="1" height="1" fill="#ffffff"/><rect x="28" y="14" width="1" height="1" fill="#ffff00"/><rect x="29" y="14" width="1" height="1" fill="#ffffff"/><rect x="30" y="14" width="1" height="1" fill="#ffff00"/><rect x="31" y="14" width="1" height="1" fill="#ffffff"/><rect x="28" y="15" width="1" height="1" fill="#ffffff"/><rect x="29" y="15" width="1" height="1" fill="#ffff00"/><rect x="30" y="15" width="1" height="1" fill="#ffffff"/><rect x="28" y="16" width="1" height="1" fill="#ffff00"/><rect x="29" y="16" width="1" height="1" fill="#ffffff"/><rect x="28" y="17" width="1" height="1" fill="#ffffff"/><rect x="33" y="14" width="1" height="1" fill="#000000"/><rect x="34" y="14" width="7" height="1" fill="#c08000"/><rect x="41" y="14" width="1" height="1" fill="#000000"/><rect x="32" y="15" width="1" height="1" fill="#000000"/><rect x="33" y="15" width="7" height="1" fill="#c08000"/><rect x="40" y="15" width="1" height="1" fill="#000000"/><rect x="31" y="16" width="1" height="1" fill="#000000"/><rect x="32" y="16" width="7" height="1" fill="#c08000"/><rect x="39" y="16" width="1" height="1" fill="#000000"/><rect x="30" y="17" width="1" height="1" fill="#000000"/><rect x="31" y="17" width="7" height="1" fill="#c08000"/><rect x="38" y="17" width="1" height="1" fill="#000000"/><rect x="29" y="18" width="1" height="1" fill="#000000"/><rect x="30" y="18" width="7" height="1" fill="#c08000"/><rect x="37" y="18" width="1" height="1" fill="#000000"/><rect x="33" y="14" width="9" height="1" fill="#000000"/><rect x="27" y="19" width="12" height="1" fill="#000000"/><rect x="50" y="7" width="14" height="14" fill="#000000"/><rect x="51" y="8" width="2" height="12" fill="#c08000"/><rect x="61" y="10" width="2" height="10" fill="#c08000"/><rect x="51" y="14" width="12" height="2" fill="#c08000"/><rect x="53" y="8" width="8" height="6" fill="#ffffff"/><rect x="54" y="9" width="6" height="4" fill="#c0c0c0"/><rect x="62" y="8" width="1" height="1" fill="#ffffff"/><rect x="59" y="17" width="2" height="1" fill="#ffffff"/><rect x="59" y="19" width="2" height="1" fill="#ffffff"/><rect x="77" y="7" width="9" height="1" fill="#000000"/><rect x="76" y="8" width="1" height="1" fill="#000000"/><rect x="77" y="8" width="8" height="1" fill="#ffffff"/><rect x="85" y="8" width="1" height="1" fill="#000000"/><rect x="76" y="9" width="1" height="1" fill="#000000"/><rect x="77" y="9" width="8" height="1" fill="#ffffff"/><rect x="85" y="9" width="1" height="1" fill="#000000"/><rect x="75" y="10" width="1" height="1" fill="#000000"/><rect x="76" y="10" width="8" height="1" fill="#ffffff"/><rect x="84" y="10" width="1" height="1" fill="#000000"/><rect x="75" y="11" width="1" height="1" fill="#000000"/><rect x="76" y="11" width="8" height="1" fill="#ffffff"/><rect x="84" y="11" width="1" height="1" fill="#000000"/><rect x="74" y="12" width="1" height="1" fill="#000000"/><rect x="75" y="12" width="8" height="1" fill="#ffffff"/><rect x="83" y="12" width="1" height="1" fill="#000000"/><rect x="78" y="9" width="5" height="1" fill="#000000"/><rect x="77" y="11" width="5" height="1" fill="#000000"/><rect x="73" y="13" width="11" height="1" fill="#000000"/><rect x="72" y="14" width="1" height="7" fill="#000000"/><rect x="73" y="14" width="10" height="1" fill="#ffffff"/><rect x="72" y="15" width="12" height="1" fill="#000000"/><rect x="73" y="16" width="10" height="2" fill="#dfdfdf"/><rect x="79" y="16" width="3" height="2" fill="#e0c000"/><rect x="72" y="18" width="12" height="1" fill="#000000"/><rect x="73" y="19" width="10" height="1" fill="#ffffff"/><rect x="73" y="20" width="11" height="1" fill="#000000"/><rect x="83" y="13" width="1" height="8" fill="#000000"/><rect x="84" y="14" width="1" height="1" fill="#000000"/><rect x="85" y="15" width="1" height="1" fill="#000000"/><rect x="84" y="16" width="1" height="1" fill="#000000"/><rect x="85" y="17" width="1" height="1" fill="#000000"/><rect x="84" y="18" width="1" height="1" fill="#000000"/><rect x="85" y="19" width="1" height="1" fill="#000000"/><rect x="84" y="20" width="1" height="1" fill="#000000"/><rect x="86" y="14" width="1" height="1" fill="#000000"/><rect x="86" y="16" width="1" height="1" fill="#000000"/><rect x="86" y="18" width="1" height="1" fill="#000000"/><rect x="85" y="14" width="1" height="1" fill="#ffffff"/><rect x="84" y="15" width="1" height="1" fill="#ffffff"/><rect x="85" y="16" width="1" height="1" fill="#ffffff"/><rect x="84" y="17" width="1" height="1" fill="#ffffff"/><rect x="85" y="18" width="1" height="1" fill="#ffffff"/><rect x="84" y="19" width="1" height="1" fill="#ffffff"/></g>
</svg>
</body></html>
